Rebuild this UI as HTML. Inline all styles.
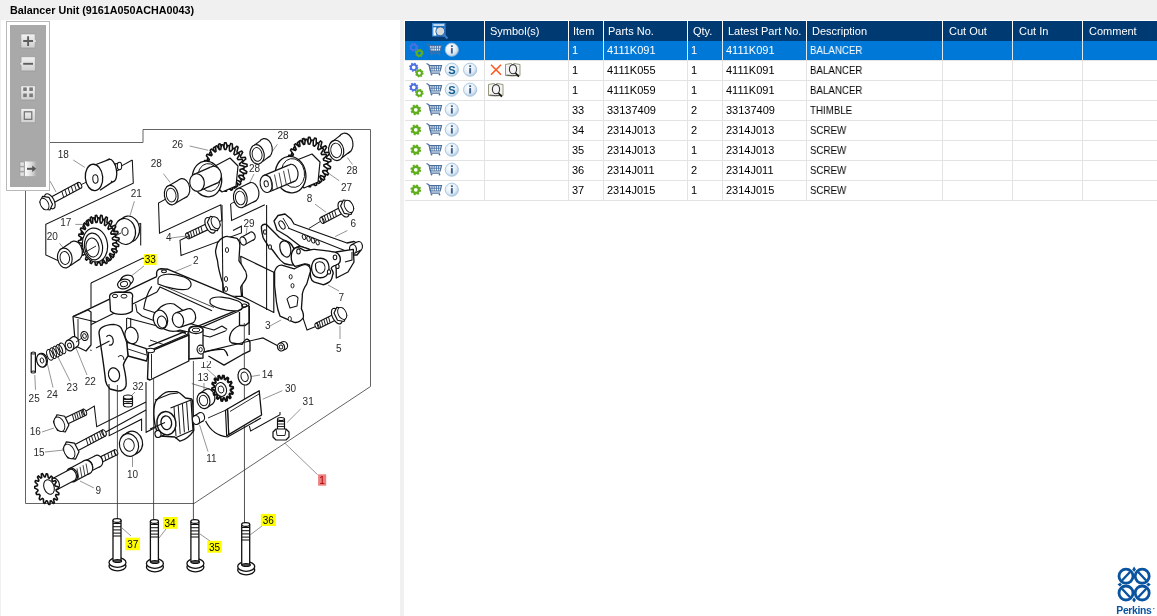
<!DOCTYPE html>
<html><head><meta charset="utf-8">
<style>
*{margin:0;padding:0;box-sizing:border-box}
html,body{width:1157px;height:616px;overflow:hidden;background:#f0f0f0;font-family:"Liberation Sans",sans-serif;position:relative}
#title{will-change:transform;position:absolute;left:10px;top:3px;font-size:10.75px;font-weight:bold;color:#000;white-space:nowrap;line-height:14px}
#left{position:absolute;left:1px;top:20px;width:399px;height:596px;background:#fff}
#right{position:absolute;left:404px;top:20px;width:753px;height:596px;background:#fff}
#diag{position:absolute;left:0;top:0}
#tb{position:absolute;left:6px;top:21px;width:44px;height:170px;border:1px solid #b9b9b9;background:#fff}
#tbi{position:absolute;left:3px;top:3px;width:36px;height:162px;background:#a9a9a9}
.hdr{position:absolute;left:405px;top:21px;width:752px;height:20px;background:#003a72}
.sel{position:absolute;left:405px;top:41px;width:752px;height:19px;background:#0078d7}
.t{will-change:transform;position:absolute;font-size:11px;line-height:14px;white-space:nowrap;color:#000}
.th{will-change:transform;position:absolute;font-size:11px;line-height:14px;white-space:nowrap;color:#fff}
.vl{position:absolute;width:1px;background:#e3e3e3}
.vh{position:absolute;width:1px;background:#ffffff;top:21px;height:20px}
.hl{position:absolute;height:1px;background:#e3e3e3;left:405px;width:752px}

</style></head><body>
<div id="title">Balancer Unit (9161A050ACHA0043)</div>
<div id="left"></div>
<div id="right"></div>
<svg id="diag" width="400" height="616" style="position:absolute;left:0;top:0;will-change:transform"><g><polyline points="26.0,142.5 143.0,142.5 143.0,129.5 370.5,129.5 370.5,386.5 194.0,503.5 25.5,503.5 25.5,142.5" fill="none" stroke="#606060" stroke-width="0.98"/>
<text x="57.7" y="158.3" font-family="Liberation Sans" font-size="10" fill="#2a2a2a">18</text>
<text x="172.0" y="147.6" font-family="Liberation Sans" font-size="10" fill="#2a2a2a">26</text>
<text x="150.7" y="167.2" font-family="Liberation Sans" font-size="10" fill="#2a2a2a">28</text>
<text x="277.4" y="139.2" font-family="Liberation Sans" font-size="10" fill="#2a2a2a">28</text>
<text x="249.0" y="172.2" font-family="Liberation Sans" font-size="10" fill="#2a2a2a">28</text>
<text x="346.4" y="173.9" font-family="Liberation Sans" font-size="10" fill="#2a2a2a">28</text>
<text x="341.0" y="191.2" font-family="Liberation Sans" font-size="10" fill="#2a2a2a">27</text>
<text x="130.8" y="196.9" font-family="Liberation Sans" font-size="10" fill="#2a2a2a">21</text>
<text x="60.2" y="226.1" font-family="Liberation Sans" font-size="10" fill="#2a2a2a">17</text>
<text x="46.8" y="239.5" font-family="Liberation Sans" font-size="10" fill="#2a2a2a">20</text>
<text x="166.0" y="241.2" font-family="Liberation Sans" font-size="10" fill="#2a2a2a">4</text>
<text x="243.5" y="226.9" font-family="Liberation Sans" font-size="10" fill="#2a2a2a">29</text>
<text x="306.8" y="202.2" font-family="Liberation Sans" font-size="10" fill="#2a2a2a">8</text>
<text x="350.4" y="226.6" font-family="Liberation Sans" font-size="10" fill="#2a2a2a">6</text>
<text x="193.0" y="263.5" font-family="Liberation Sans" font-size="10" fill="#2a2a2a">2</text>
<text x="338.6" y="300.6" font-family="Liberation Sans" font-size="10" fill="#2a2a2a">7</text>
<text x="265.0" y="328.7" font-family="Liberation Sans" font-size="10" fill="#2a2a2a">3</text>
<text x="336.0" y="351.5" font-family="Liberation Sans" font-size="10" fill="#2a2a2a">5</text>
<text x="28.6" y="402.4" font-family="Liberation Sans" font-size="10" fill="#2a2a2a">25</text>
<text x="46.8" y="397.8" font-family="Liberation Sans" font-size="10" fill="#2a2a2a">24</text>
<text x="66.6" y="391.2" font-family="Liberation Sans" font-size="10" fill="#2a2a2a">23</text>
<text x="84.8" y="385.3" font-family="Liberation Sans" font-size="10" fill="#2a2a2a">22</text>
<text x="132.5" y="390.0" font-family="Liberation Sans" font-size="10" fill="#2a2a2a">32</text>
<text x="200.4" y="368.2" font-family="Liberation Sans" font-size="10" fill="#2a2a2a">12</text>
<text x="197.4" y="381.2" font-family="Liberation Sans" font-size="10" fill="#2a2a2a">13</text>
<text x="261.7" y="378.3" font-family="Liberation Sans" font-size="10" fill="#2a2a2a">14</text>
<text x="285.0" y="391.5" font-family="Liberation Sans" font-size="10" fill="#2a2a2a">30</text>
<text x="302.6" y="404.6" font-family="Liberation Sans" font-size="10" fill="#2a2a2a">31</text>
<text x="206.2" y="461.6" font-family="Liberation Sans" font-size="10" fill="#2a2a2a">11</text>
<text x="29.7" y="435.4" font-family="Liberation Sans" font-size="10" fill="#2a2a2a">16</text>
<text x="33.4" y="456.2" font-family="Liberation Sans" font-size="10" fill="#2a2a2a">15</text>
<text x="127.0" y="478.2" font-family="Liberation Sans" font-size="10" fill="#2a2a2a">10</text>
<text x="95.5" y="493.8" font-family="Liberation Sans" font-size="10" fill="#2a2a2a">9</text>
<polyline points="73.2,160.0 84.8,167.4" fill="none" stroke="#777" stroke-width="0.78"/>
<polyline points="132.3,160.0 133.3,183.2 45.8,224.4 45.8,255.0 61.6,262.3" fill="none" stroke="#111" stroke-width="1.04"/>
<polyline points="132.3,160.0 120.7,166.4" fill="none" stroke="#111" stroke-width="1.04"/>
<polyline points="50.0,181.0 56.0,192.0" fill="none" stroke="#777" stroke-width="0.78"/>
<polyline points="79.6,185.3 93.3,179.0" fill="none" stroke="#111" stroke-width="0.91"/>
<ellipse cx="116.0" cy="167.5" rx="2.2" ry="3.8" transform="rotate(0 116.0 167.5)" fill="#fff" stroke="#111" stroke-width="1.04"/>
<polygon points="118.2,162.9 114.7,164.4 117.3,170.6 120.8,169.1" fill="#fff" stroke="none" stroke-width="0.00" stroke-linejoin="round"/>
<polyline points="118.2,162.9 114.7,164.4" fill="none" stroke="#111" stroke-width="1.04"/>
<polyline points="120.8,169.1 117.3,170.6" fill="none" stroke="#111" stroke-width="1.04"/>
<ellipse cx="119.5" cy="166.0" rx="2.2" ry="3.8" transform="rotate(0 119.5 166.0)" fill="#fff" stroke="#111" stroke-width="1.04"/>
<ellipse cx="111.0" cy="170.5" rx="5.5" ry="11.5" transform="rotate(-10 111.0 170.5)" fill="#fff" stroke="#111" stroke-width="1.30"/>
<polygon points="94.0,164.3 110.0,159.0 111.0,182.0 101.0,190.5" fill="#fff" stroke="#111" stroke-width="0.00" stroke-linejoin="round"/>
<polyline points="96.0,164.5 110.0,159.1" fill="none" stroke="#111" stroke-width="1.30"/>
<polyline points="100.0,190.3 112.5,181.9" fill="none" stroke="#111" stroke-width="1.30"/>
<ellipse cx="94.0" cy="177.4" rx="8.7" ry="13.2" transform="rotate(-5 94.0 177.4)" fill="#fff" stroke="#111" stroke-width="1.30"/>
<ellipse cx="95.4" cy="179.0" rx="2.6" ry="4.2" transform="rotate(-5 95.4 179.0)" fill="#fff" stroke="#111" stroke-width="1.04"/>
<polygon points="49.5,205.0 81.1,188.1 78.1,182.5 46.5,199.4" fill="#fff" stroke="#111" stroke-width="1.17" stroke-linejoin="round"/>
<ellipse cx="79.6" cy="185.3" rx="1.8" ry="3.2" transform="rotate(-28.138322503823897 79.6 185.3)" fill="#fff" stroke="#111" stroke-width="0.94"/>
<polyline points="79.5,189.0 77.6,182.8" fill="none" stroke="#111" stroke-width="0.94"/>
<polyline points="76.4,190.7 74.4,184.4" fill="none" stroke="#111" stroke-width="0.94"/>
<polyline points="73.2,192.3 71.2,186.1" fill="none" stroke="#111" stroke-width="0.94"/>
<polyline points="70.0,194.0 68.1,187.8" fill="none" stroke="#111" stroke-width="0.94"/>
<polyline points="66.9,195.7 64.9,189.5" fill="none" stroke="#111" stroke-width="0.94"/>
<polyline points="63.7,197.4 61.8,191.2" fill="none" stroke="#111" stroke-width="0.94"/>
<ellipse cx="49.8" cy="201.3" rx="4.3" ry="8.2" transform="rotate(-28.138322503823897 49.8 201.3)" fill="#fff" stroke="#111" stroke-width="1.17"/>
<polygon points="52.5,204.2 49.9,210.0 43.6,209.0 39.9,202.1 42.6,196.3 48.9,197.3" fill="#fff" stroke="#111" stroke-width="1.17" stroke-linejoin="round"/>
<ellipse cx="44.5" cy="204.1" rx="3.9" ry="6.2" transform="rotate(-28.138322503823897 44.5 204.1)" fill="#fff" stroke="#111" stroke-width="0.94"/>
<polyline points="134.4,201.2 129.0,219.0" fill="none" stroke="#777" stroke-width="0.78"/>
<polyline points="59.5,243.3 64.8,249.7" fill="none" stroke="#777" stroke-width="0.78"/>
<polyline points="75.3,224.4 84.8,224.4" fill="none" stroke="#777" stroke-width="0.78"/>
<polyline points="140.7,223.3 140.7,245.4" fill="none" stroke="#111" stroke-width="1.04"/>
<polyline points="140.7,223.3 133.0,227.0" fill="none" stroke="#111" stroke-width="1.04"/>
<ellipse cx="129.0" cy="229.0" rx="10.5" ry="13.0" transform="rotate(-8 129.0 229.0)" fill="#fff" stroke="#111" stroke-width="1.17"/>
<polygon points="131.6,242.1 135.6,239.6 122.4,218.4 118.4,220.9" fill="#fff" stroke="none" stroke-width="0.00" stroke-linejoin="round"/>
<polyline points="131.6,242.1 135.6,239.6" fill="none" stroke="#111" stroke-width="1.17"/>
<polyline points="118.4,220.9 122.4,218.4" fill="none" stroke="#111" stroke-width="1.17"/>
<ellipse cx="125.0" cy="231.5" rx="10.5" ry="13.0" transform="rotate(-8 125.0 231.5)" fill="#fff" stroke="#111" stroke-width="1.17"/>
<ellipse cx="125.0" cy="231.5" rx="3.1" ry="3.9" transform="rotate(-8 125.0 231.5)" fill="#fff" stroke="#111" stroke-width="0.94"/>
<polyline points="109.0,239.0 121.0,233.0" fill="none" stroke="#111" stroke-width="0.91"/>
<polygon points="115.1,236.9 119.0,238.1 119.1,239.8 115.3,241.0 115.2,242.3 118.8,244.8 118.5,246.5 114.5,246.3 114.1,247.5 117.1,251.1 116.4,252.6 112.5,250.9 111.9,252.0 113.9,256.4 113.0,257.6 109.6,254.7 108.7,255.4 109.7,260.3 108.5,261.1 105.8,257.1 104.8,257.5 104.7,262.5 103.3,262.8 101.6,258.1 100.5,258.1 99.3,262.8 97.9,262.5 97.2,257.6 96.2,257.2 93.9,261.1 92.6,260.4 93.1,255.5 92.2,254.8 89.1,257.7 88.0,256.6 89.6,252.1 88.8,251.1 85.1,252.7 84.3,251.3 86.8,247.6 86.3,246.4 82.3,246.6 81.9,245.0 85.2,242.5 84.9,241.1 81.0,239.9 80.9,238.2 84.7,237.0 84.8,235.7 81.2,233.2 81.5,231.5 85.5,231.7 85.9,230.5 82.9,226.9 83.6,225.4 87.5,227.1 88.1,226.0 86.1,221.6 87.0,220.4 90.4,223.3 91.3,222.6 90.3,217.7 91.5,216.9 94.2,220.9 95.2,220.5 95.3,215.5 96.7,215.2 98.4,219.9 99.5,219.9 100.7,215.2 102.1,215.5 102.8,220.4 103.8,220.8 106.1,216.9 107.4,217.6 106.9,222.5 107.8,223.2 110.9,220.3 112.0,221.4 110.4,225.9 111.2,226.9 114.9,225.3 115.7,226.7 113.2,230.4 113.7,231.6 117.7,231.4 118.1,233.0 114.8,235.5 115.1,236.9" fill="#fff" stroke="#111" stroke-width="1.56" stroke-linejoin="round"/>
<polygon points="112.6,239.4 116.5,240.6 116.6,242.3 112.8,243.5 112.7,244.8 116.3,247.3 116.0,249.0 112.0,248.8 111.6,250.0 114.6,253.6 113.9,255.1 110.0,253.4 109.4,254.5 111.4,258.9 110.5,260.1 107.1,257.2 106.2,257.9 107.2,262.8 106.0,263.6 103.3,259.6 102.3,260.0 102.2,265.0 100.8,265.3 99.1,260.6 98.0,260.6 96.8,265.3 95.4,265.0 94.7,260.1 93.7,259.7 91.4,263.6 90.1,262.9 90.6,258.0 89.7,257.3 86.6,260.2 85.5,259.1 87.1,254.6 86.3,253.6 82.6,255.2 81.8,253.8 84.3,250.1 83.8,248.9 79.8,249.1 79.4,247.5 82.7,245.0 82.4,243.6 78.5,242.4 78.4,240.7 82.2,239.5 82.3,238.2 78.7,235.7 79.0,234.0 83.0,234.2 83.4,233.0 80.4,229.4 81.1,227.9 85.0,229.6 85.6,228.5 83.6,224.1 84.5,222.9 87.9,225.8 88.8,225.1 87.8,220.2 89.0,219.4 91.7,223.4 92.7,223.0 92.8,218.0 94.2,217.7 95.9,222.4 97.0,222.4 98.2,217.7 99.6,218.0 100.3,222.9 101.3,223.3 103.6,219.4 104.9,220.1 104.4,225.0 105.3,225.7 108.4,222.8 109.5,223.9 107.9,228.4 108.7,229.4 112.4,227.8 113.2,229.2 110.7,232.9 111.2,234.1 115.2,233.9 115.6,235.5 112.3,238.0 112.6,239.4" fill="#fff" stroke="#111" stroke-width="1.56" stroke-linejoin="round"/>
<ellipse cx="95.0" cy="245.0" rx="12.5" ry="17.0" transform="rotate(-8 95.0 245.0)" fill="#fff" stroke="#111" stroke-width="1.17"/>
<ellipse cx="93.5" cy="246.5" rx="9.0" ry="13.5" transform="rotate(-8 93.5 246.5)" fill="#fff" stroke="#111" stroke-width="1.17"/>
<ellipse cx="92.5" cy="247.5" rx="6.5" ry="9.5" transform="rotate(-8 92.5 247.5)" fill="#fff" stroke="#111" stroke-width="1.04"/>
<polyline points="85.9,251.8 96.0,246.0" fill="none" stroke="#111" stroke-width="0.91"/>
<ellipse cx="75.0" cy="251.0" rx="7.2" ry="10.0" transform="rotate(-10 75.0 251.0)" fill="#fff" stroke="#111" stroke-width="1.17"/>
<polygon points="70.1,265.7 80.3,258.7 69.7,243.3 59.5,250.3" fill="#fff" stroke="none" stroke-width="0.00" stroke-linejoin="round"/>
<polyline points="70.1,265.7 80.3,258.7" fill="none" stroke="#111" stroke-width="1.17"/>
<polyline points="59.5,250.3 69.7,243.3" fill="none" stroke="#111" stroke-width="1.17"/>
<ellipse cx="64.8" cy="258.0" rx="7.2" ry="10.0" transform="rotate(-10 64.8 258.0)" fill="#fff" stroke="#111" stroke-width="1.17"/>
<ellipse cx="64.8" cy="258.0" rx="4.7" ry="6.5" transform="rotate(-10 64.8 258.0)" fill="#fff" stroke="#111" stroke-width="0.94"/>
<polyline points="189.7,146.0 208.2,150.3" fill="none" stroke="#777" stroke-width="0.78"/>
<polyline points="163.4,173.7 170.2,182.5" fill="none" stroke="#777" stroke-width="0.78"/>
<polyline points="169.2,197.1 158.5,203.0 159.5,233.1 220.8,204.9 221.8,220.5" fill="none" stroke="#111" stroke-width="1.04"/>
<polyline points="221.8,220.5 214.0,224.0" fill="none" stroke="#111" stroke-width="1.04"/>
<polyline points="171.0,238.0 186.0,236.0" fill="none" stroke="#777" stroke-width="0.78"/>
<ellipse cx="231.0" cy="168.0" rx="6.0" ry="10.0" transform="rotate(-10 231.0 168.0)" fill="#fff" stroke="#111" stroke-width="1.17"/>
<polygon points="242.8,163.2 247.0,164.3 247.1,166.2 243.1,167.6 243.0,169.1 246.8,171.6 246.4,173.4 242.1,173.3 241.7,174.6 244.6,178.3 243.8,179.8 239.7,178.2 238.9,179.3 240.8,183.8 239.6,185.0 236.0,182.0 235.0,182.7 235.5,187.6 234.1,188.2 231.5,184.2 230.3,184.4 229.5,189.2 227.9,189.3 226.5,184.6 225.2,184.4 223.2,188.6 221.7,188.1 221.5,183.2 220.4,182.5 217.3,185.8 215.9,184.8 217.1,180.1 216.2,179.1 212.3,181.0 211.3,179.6 213.7,175.6 213.0,174.3 208.8,174.8 208.2,173.0 211.5,170.2 211.2,168.8 207.0,167.7 206.9,165.8 210.9,164.4 211.0,162.9 207.2,160.4 207.6,158.6 211.9,158.7 212.3,157.4 209.4,153.7 210.2,152.2 214.3,153.8 215.1,152.7 213.2,148.2 214.4,147.0 218.0,150.0 219.0,149.3 218.5,144.4 219.9,143.8 222.5,147.8 223.7,147.6 224.5,142.8 226.1,142.7 227.5,147.4 228.8,147.6 230.8,143.4 232.3,143.9 232.5,148.8 233.6,149.5 236.7,146.2 238.1,147.2 236.9,151.9 237.8,152.9 241.7,151.0 242.7,152.4 240.3,156.4 241.0,157.7 245.2,157.2 245.8,159.0 242.5,161.8 242.8,163.2" fill="#fff" stroke="#111" stroke-width="1.56" stroke-linejoin="round"/>
<polygon points="239.8,165.2 244.0,166.3 244.1,168.2 240.1,169.6 240.0,171.1 243.8,173.6 243.4,175.4 239.1,175.3 238.7,176.6 241.6,180.3 240.8,181.8 236.7,180.2 235.9,181.3 237.8,185.8 236.6,187.0 233.0,184.0 232.0,184.7 232.5,189.6 231.1,190.2 228.5,186.2 227.3,186.4 226.5,191.2 224.9,191.3 223.5,186.6 222.2,186.4 220.2,190.6 218.7,190.1 218.5,185.2 217.4,184.5 214.3,187.8 212.9,186.8 214.1,182.1 213.2,181.1 209.3,183.0 208.3,181.6 210.7,177.6 210.0,176.3 205.8,176.8 205.2,175.0 208.5,172.2 208.2,170.8 204.0,169.7 203.9,167.8 207.9,166.4 208.0,164.9 204.2,162.4 204.6,160.6 208.9,160.7 209.3,159.4 206.4,155.7 207.2,154.2 211.3,155.8 212.1,154.7 210.2,150.2 211.4,149.0 215.0,152.0 216.0,151.3 215.5,146.4 216.9,145.8 219.5,149.8 220.7,149.6 221.5,144.8 223.1,144.7 224.5,149.4 225.8,149.6 227.8,145.4 229.3,145.9 229.5,150.8 230.6,151.5 233.7,148.2 235.1,149.2 233.9,153.9 234.8,154.9 238.7,153.0 239.7,154.4 237.3,158.4 238.0,159.7 242.2,159.2 242.8,161.0 239.5,163.8 239.8,165.2" fill="#fff" stroke="#111" stroke-width="1.56" stroke-linejoin="round"/>
<polygon points="215.0,166.0 230.0,158.0 238.0,166.0 236.0,186.0 222.0,192.0 214.0,184.0" fill="#fff" stroke="#111" stroke-width="1.17" stroke-linejoin="round"/>
<ellipse cx="207.0" cy="179.0" rx="14.6" ry="18.0" transform="rotate(-10 207.0 179.0)" fill="#fff" stroke="#111" stroke-width="1.30"/>
<ellipse cx="209.0" cy="177.5" rx="11.0" ry="14.0" transform="rotate(-10 209.0 177.5)" fill="none" stroke="#111" stroke-width="0.91"/>
<ellipse cx="214.0" cy="175.0" rx="7.3" ry="8.8" transform="rotate(-10 214.0 175.0)" fill="#fff" stroke="#111" stroke-width="1.17"/>
<polygon points="200.5,190.4 217.5,182.9 210.5,167.1 193.5,174.6" fill="#fff" stroke="none" stroke-width="0.00" stroke-linejoin="round"/>
<polyline points="200.5,190.4 217.5,182.9" fill="none" stroke="#111" stroke-width="1.17"/>
<polyline points="193.5,174.6 210.5,167.1" fill="none" stroke="#111" stroke-width="1.17"/>
<ellipse cx="197.0" cy="182.5" rx="7.3" ry="8.8" transform="rotate(-10 197.0 182.5)" fill="#fff" stroke="#111" stroke-width="1.17"/>
<ellipse cx="182.9" cy="188.3" rx="6.8" ry="9.8" transform="rotate(-10 182.9 188.3)" fill="#fff" stroke="#111" stroke-width="1.17"/>
<polygon points="175.8,203.1 187.5,196.3 178.3,180.3 166.6,187.1" fill="#fff" stroke="none" stroke-width="0.00" stroke-linejoin="round"/>
<polyline points="175.8,203.1 187.5,196.3" fill="none" stroke="#111" stroke-width="1.17"/>
<polyline points="166.6,187.1 178.3,180.3" fill="none" stroke="#111" stroke-width="1.17"/>
<ellipse cx="171.2" cy="195.1" rx="6.8" ry="9.8" transform="rotate(-10 171.2 195.1)" fill="#fff" stroke="#111" stroke-width="1.17"/>
<ellipse cx="171.2" cy="195.1" rx="4.8" ry="6.9" transform="rotate(-10 171.2 195.1)" fill="#fff" stroke="#111" stroke-width="0.94"/>
<polygon points="210.7,221.7 186.4,233.3 189.0,238.7 213.3,227.1" fill="#fff" stroke="#111" stroke-width="1.17" stroke-linejoin="round"/>
<ellipse cx="187.7" cy="236.0" rx="1.7" ry="3.0" transform="rotate(154.48176517732546 187.7 236.0)" fill="#fff" stroke="#111" stroke-width="0.94"/>
<polyline points="187.7,232.7 189.2,238.6" fill="none" stroke="#111" stroke-width="0.94"/>
<polyline points="190.4,231.4 191.9,237.3" fill="none" stroke="#111" stroke-width="0.94"/>
<polyline points="193.0,230.2 194.5,236.1" fill="none" stroke="#111" stroke-width="0.94"/>
<polyline points="195.6,228.9 197.1,234.8" fill="none" stroke="#111" stroke-width="0.94"/>
<polyline points="198.3,227.6 199.8,233.6" fill="none" stroke="#111" stroke-width="0.94"/>
<polyline points="200.9,226.4 202.4,232.3" fill="none" stroke="#111" stroke-width="0.94"/>
<ellipse cx="210.2" cy="225.3" rx="4.4" ry="8.4" transform="rotate(154.48176517732546 210.2 225.3)" fill="#fff" stroke="#111" stroke-width="1.17"/>
<polygon points="207.4,222.2 210.4,216.3 216.8,217.7 220.2,224.9 217.3,230.8 210.8,229.4" fill="#fff" stroke="#111" stroke-width="1.17" stroke-linejoin="round"/>
<ellipse cx="215.6" cy="222.7" rx="4.0" ry="6.4" transform="rotate(154.48176517732546 215.6 222.7)" fill="#fff" stroke="#111" stroke-width="0.94"/>
<polyline points="254.0,174.0 248.0,186.0" fill="none" stroke="#777" stroke-width="0.78"/>
<polyline points="230.6,203.9 231.6,220.5 264.8,204.7" fill="none" stroke="#111" stroke-width="1.04"/>
<polyline points="230.6,203.9 240.0,199.0" fill="none" stroke="#111" stroke-width="0.91"/>
<ellipse cx="252.0" cy="192.2" rx="6.8" ry="9.8" transform="rotate(-10 252.0 192.2)" fill="#fff" stroke="#111" stroke-width="1.17"/>
<polygon points="244.5,206.4 256.2,200.6 247.8,183.8 236.1,189.6" fill="#fff" stroke="none" stroke-width="0.00" stroke-linejoin="round"/>
<polyline points="244.5,206.4 256.2,200.6" fill="none" stroke="#111" stroke-width="1.17"/>
<polyline points="236.1,189.6 247.8,183.8" fill="none" stroke="#111" stroke-width="1.17"/>
<ellipse cx="240.3" cy="198.0" rx="6.8" ry="9.8" transform="rotate(-10 240.3 198.0)" fill="#fff" stroke="#111" stroke-width="1.17"/>
<ellipse cx="240.3" cy="198.0" rx="4.8" ry="6.9" transform="rotate(-10 240.3 198.0)" fill="#fff" stroke="#111" stroke-width="0.94"/>
<polyline points="247.0,227.3 246.2,234.0" fill="none" stroke="#777" stroke-width="0.78"/>
<ellipse cx="252.0" cy="236.0" rx="3.0" ry="4.2" transform="rotate(-20 252.0 236.0)" fill="#fff" stroke="#111" stroke-width="1.17"/>
<polygon points="245.0,244.6 254.0,239.6 250.0,232.4 241.0,237.4" fill="#fff" stroke="none" stroke-width="0.00" stroke-linejoin="round"/>
<polyline points="245.0,244.6 254.0,239.6" fill="none" stroke="#111" stroke-width="1.17"/>
<polyline points="241.0,237.4 250.0,232.4" fill="none" stroke="#111" stroke-width="1.17"/>
<ellipse cx="243.0" cy="241.0" rx="3.0" ry="4.2" transform="rotate(-20 243.0 241.0)" fill="#fff" stroke="#111" stroke-width="1.17"/>
<polyline points="277.4,144.3 272.3,151.4" fill="none" stroke="#777" stroke-width="0.78"/>
<ellipse cx="265.2" cy="148.3" rx="7.0" ry="9.8" transform="rotate(-10 265.2 148.3)" fill="#fff" stroke="#111" stroke-width="1.17"/>
<polygon points="262.5,161.6 270.6,155.5 259.8,141.1 251.7,147.2" fill="#fff" stroke="none" stroke-width="0.00" stroke-linejoin="round"/>
<polyline points="262.5,161.6 270.6,155.5" fill="none" stroke="#111" stroke-width="1.17"/>
<polyline points="251.7,147.2 259.8,141.1" fill="none" stroke="#111" stroke-width="1.17"/>
<ellipse cx="257.1" cy="154.4" rx="7.0" ry="9.8" transform="rotate(-10 257.1 154.4)" fill="#fff" stroke="#111" stroke-width="1.17"/>
<ellipse cx="257.1" cy="154.4" rx="4.9" ry="6.9" transform="rotate(-10 257.1 154.4)" fill="#fff" stroke="#111" stroke-width="0.94"/>
<polyline points="329.1,173.7 339.3,180.8" fill="none" stroke="#777" stroke-width="0.78"/>
<polygon points="326.6,158.2 330.8,159.4 330.9,161.3 326.9,162.7 326.9,164.2 330.6,166.8 330.3,168.6 326.0,168.5 325.6,169.8 328.5,173.6 327.7,175.1 323.6,173.5 322.8,174.6 324.7,179.2 323.5,180.3 320.0,177.3 319.0,178.0 319.6,183.0 318.1,183.6 315.5,179.5 314.3,179.8 313.6,184.6 312.0,184.7 310.6,179.9 309.3,179.7 307.4,184.0 305.8,183.4 305.7,178.4 304.5,177.8 301.5,181.1 300.1,180.0 301.3,175.3 300.3,174.2 296.5,176.2 295.5,174.7 297.9,170.7 297.2,169.4 293.0,169.8 292.4,168.1 295.7,165.2 295.4,163.8 291.2,162.6 291.1,160.7 295.1,159.3 295.1,157.8 291.4,155.2 291.7,153.4 296.0,153.5 296.4,152.2 293.5,148.4 294.3,146.9 298.4,148.5 299.2,147.4 297.3,142.8 298.5,141.7 302.0,144.7 303.0,144.0 302.4,139.0 303.9,138.4 306.5,142.5 307.7,142.2 308.4,137.4 310.0,137.3 311.4,142.1 312.7,142.3 314.6,138.0 316.2,138.6 316.3,143.6 317.5,144.2 320.5,140.9 321.9,142.0 320.7,146.7 321.7,147.8 325.5,145.8 326.5,147.3 324.1,151.3 324.8,152.6 329.0,152.2 329.6,153.9 326.3,156.8 326.6,158.2" fill="#fff" stroke="#111" stroke-width="1.56" stroke-linejoin="round"/>
<polygon points="323.6,160.2 327.8,161.4 327.9,163.3 323.9,164.7 323.9,166.2 327.6,168.8 327.3,170.6 323.0,170.5 322.6,171.8 325.5,175.6 324.7,177.1 320.6,175.5 319.8,176.6 321.7,181.2 320.5,182.3 317.0,179.3 316.0,180.0 316.6,185.0 315.1,185.6 312.5,181.5 311.3,181.8 310.6,186.6 309.0,186.7 307.6,181.9 306.3,181.7 304.4,186.0 302.8,185.4 302.7,180.4 301.5,179.8 298.5,183.1 297.1,182.0 298.3,177.3 297.3,176.2 293.5,178.2 292.5,176.7 294.9,172.7 294.2,171.4 290.0,171.8 289.4,170.1 292.7,167.2 292.4,165.8 288.2,164.6 288.1,162.7 292.1,161.3 292.1,159.8 288.4,157.2 288.7,155.4 293.0,155.5 293.4,154.2 290.5,150.4 291.3,148.9 295.4,150.5 296.2,149.4 294.3,144.8 295.5,143.7 299.0,146.7 300.0,146.0 299.4,141.0 300.9,140.4 303.5,144.5 304.7,144.2 305.4,139.4 307.0,139.3 308.4,144.1 309.7,144.3 311.6,140.0 313.2,140.6 313.3,145.6 314.5,146.2 317.5,142.9 318.9,144.0 317.7,148.7 318.7,149.8 322.5,147.8 323.5,149.3 321.1,153.3 321.8,154.6 326.0,154.2 326.6,155.9 323.3,158.8 323.6,160.2" fill="#fff" stroke="#111" stroke-width="1.56" stroke-linejoin="round"/>
<polygon points="297.0,160.0 312.0,154.0 320.0,162.0 318.0,182.0 304.0,188.0 296.0,180.0" fill="#fff" stroke="#111" stroke-width="1.17" stroke-linejoin="round"/>
<ellipse cx="290.6" cy="174.7" rx="15.2" ry="18.3" transform="rotate(-10 290.6 174.7)" fill="#fff" stroke="#111" stroke-width="1.30"/>
<ellipse cx="293.0" cy="173.0" rx="11.5" ry="14.5" transform="rotate(-10 293.0 173.0)" fill="none" stroke="#111" stroke-width="0.91"/>
<ellipse cx="292.0" cy="173.0" rx="6.0" ry="8.8" transform="rotate(-10 292.0 173.0)" fill="#fff" stroke="#111" stroke-width="1.17"/>
<polygon points="269.5,191.7 295.3,180.9 288.7,165.1 262.9,175.9" fill="#fff" stroke="none" stroke-width="0.00" stroke-linejoin="round"/>
<polyline points="269.5,191.7 295.3,180.9" fill="none" stroke="#111" stroke-width="1.17"/>
<polyline points="262.9,175.9 288.7,165.1" fill="none" stroke="#111" stroke-width="1.17"/>
<ellipse cx="266.2" cy="183.8" rx="6.0" ry="8.8" transform="rotate(-10 266.2 183.8)" fill="#fff" stroke="#111" stroke-width="1.17"/>
<ellipse cx="266.2" cy="183.8" rx="2.1" ry="3.1" transform="rotate(-10 266.2 183.8)" fill="#fff" stroke="#111" stroke-width="0.94"/>
<polyline points="270.0,176.5 273.0,191.0" fill="none" stroke="#111" stroke-width="0.78"/>
<polyline points="274.5,174.6 277.5,189.1" fill="none" stroke="#111" stroke-width="0.78"/>
<polyline points="279.0,172.7 282.0,187.2" fill="none" stroke="#111" stroke-width="0.78"/>
<polyline points="283.5,170.8 286.5,185.3" fill="none" stroke="#111" stroke-width="0.78"/>
<polyline points="288.0,168.9 291.0,183.4" fill="none" stroke="#111" stroke-width="0.78"/>
<polyline points="347.4,157.5 352.5,164.6" fill="none" stroke="#777" stroke-width="0.78"/>
<ellipse cx="345.4" cy="143.3" rx="7.5" ry="10.2" transform="rotate(-10 345.4 143.3)" fill="#fff" stroke="#111" stroke-width="1.17"/>
<polygon points="341.9,157.8 351.1,150.7 339.7,135.9 330.5,143.0" fill="#fff" stroke="none" stroke-width="0.00" stroke-linejoin="round"/>
<polyline points="341.9,157.8 351.1,150.7" fill="none" stroke="#111" stroke-width="1.17"/>
<polyline points="330.5,143.0 339.7,135.9" fill="none" stroke="#111" stroke-width="1.17"/>
<ellipse cx="336.2" cy="150.4" rx="7.5" ry="10.2" transform="rotate(-10 336.2 150.4)" fill="#fff" stroke="#111" stroke-width="1.17"/>
<ellipse cx="336.2" cy="150.4" rx="5.4" ry="7.3" transform="rotate(-10 336.2 150.4)" fill="#fff" stroke="#111" stroke-width="0.94"/>
<polyline points="315.0,204.1 326.1,212.3" fill="none" stroke="#777" stroke-width="0.78"/>
<polyline points="322.0,220.4 308.8,228.5" fill="none" stroke="#111" stroke-width="0.91"/>
<polygon points="343.9,205.4 320.5,217.6 323.5,223.2 346.9,211.0" fill="#fff" stroke="#111" stroke-width="1.17" stroke-linejoin="round"/>
<ellipse cx="322.0" cy="220.4" rx="1.8" ry="3.2" transform="rotate(152.4639268918428 322.0 220.4)" fill="#fff" stroke="#111" stroke-width="0.94"/>
<polyline points="321.8,216.9 323.7,223.1" fill="none" stroke="#111" stroke-width="0.94"/>
<polyline points="324.3,215.6 326.2,221.8" fill="none" stroke="#111" stroke-width="0.94"/>
<polyline points="326.9,214.3 328.8,220.5" fill="none" stroke="#111" stroke-width="0.94"/>
<polyline points="329.4,212.9 331.3,219.2" fill="none" stroke="#111" stroke-width="0.94"/>
<polyline points="331.9,211.6 333.8,217.8" fill="none" stroke="#111" stroke-width="0.94"/>
<polyline points="334.5,210.3 336.4,216.5" fill="none" stroke="#111" stroke-width="0.94"/>
<ellipse cx="343.6" cy="209.1" rx="4.5" ry="8.6" transform="rotate(152.4639268918428 343.6 209.1)" fill="#fff" stroke="#111" stroke-width="1.17"/>
<polygon points="340.6,206.1 343.4,200.0 350.0,201.2 353.8,208.4 351.0,214.5 344.3,213.4" fill="#fff" stroke="#111" stroke-width="1.17" stroke-linejoin="round"/>
<ellipse cx="348.9" cy="206.4" rx="4.1" ry="6.6" transform="rotate(152.4639268918428 348.9 206.4)" fill="#fff" stroke="#111" stroke-width="0.94"/>
<polyline points="188.0,236.5 180.0,240.2 181.0,255.4 241.4,233.0 241.4,226.2 233.0,230.5" fill="none" stroke="#111" stroke-width="1.04"/>
<polygon points="274.0,221.0 278.0,215.5 285.0,214.0 291.0,219.0 294.0,224.0 347.0,243.0 354.0,241.5 360.0,244.5 361.0,250.0 357.0,255.0 351.0,255.0 345.0,258.0 327.0,256.0 300.0,246.0 287.0,236.0 277.0,230.0" fill="#fff" stroke="#111" stroke-width="1.30" stroke-linejoin="round"/>
<polyline points="288.0,228.0 346.0,251.0" fill="none" stroke="#111" stroke-width="1.04"/>
<polyline points="283.0,218.0 289.0,228.0" fill="none" stroke="#111" stroke-width="0.91"/>
<ellipse cx="304.0" cy="237.0" rx="1.6" ry="2.6" transform="rotate(-20 304.0 237.0)" fill="#fff" stroke="#111" stroke-width="0.91"/>
<ellipse cx="308.5" cy="238.8" rx="1.6" ry="2.6" transform="rotate(-20 308.5 238.8)" fill="#fff" stroke="#111" stroke-width="0.91"/>
<ellipse cx="313.0" cy="240.6" rx="1.6" ry="2.6" transform="rotate(-20 313.0 240.6)" fill="#fff" stroke="#111" stroke-width="0.91"/>
<ellipse cx="317.5" cy="242.4" rx="1.6" ry="2.6" transform="rotate(-20 317.5 242.4)" fill="#fff" stroke="#111" stroke-width="0.91"/>
<ellipse cx="282.0" cy="225.0" rx="2.4" ry="4.5" transform="rotate(-30 282.0 225.0)" fill="#fff" stroke="#111" stroke-width="1.04"/>
<ellipse cx="359.0" cy="246.0" rx="3.4" ry="4.5" transform="rotate(-10 359.0 246.0)" fill="#fff" stroke="#111" stroke-width="1.17"/>
<polygon points="355.0,252.9 361.0,249.9 357.0,242.1 351.0,245.1" fill="#fff" stroke="none" stroke-width="0.00" stroke-linejoin="round"/>
<polyline points="355.0,252.9 361.0,249.9" fill="none" stroke="#111" stroke-width="1.17"/>
<polyline points="351.0,245.1 357.0,242.1" fill="none" stroke="#111" stroke-width="1.17"/>
<ellipse cx="353.0" cy="249.0" rx="3.4" ry="4.5" transform="rotate(-10 353.0 249.0)" fill="#fff" stroke="#111" stroke-width="1.17"/>
<polyline points="347.4,230.5 335.2,236.6" fill="none" stroke="#777" stroke-width="0.78"/>
<path d="M261.5,226.1 C263,224 265,224 266.4,224.5 L272.9,231 L279.4,237.5 C283,240 286,241 289.1,242.4 C292,244 293,247 294,248.9 C296,247 298,246 300.5,246.4 L308.6,248.9 C311,250 312,252 311.8,253.7 C311,257 310,259 308.6,260.2 C305,262 302,263 300.5,263.5 L292.4,265.1 C289,265 286,264 284.2,263.5 C281,261 279,259 277.7,257 L272.9,250.5 C271,248 269,247 268,245.6 C266,242 264,240 263.1,237.5 C262,233 261,229 261.5,226.1 Z" fill="#fff" stroke="#111" stroke-width="1.37" stroke-linejoin="round"/>
<path d="M280,244 C282,239 288,240 290,246 C292,252 290,258 286,257 C282,256 279,250 280,244 Z" fill="none" stroke="#111" stroke-width="1.23" stroke-linejoin="round"/>
<ellipse cx="265.0" cy="232.0" rx="1.5" ry="2.2" transform="rotate(0 265.0 232.0)" fill="#fff" stroke="#111" stroke-width="1.04"/>
<ellipse cx="270.0" cy="247.0" rx="1.5" ry="2.2" transform="rotate(0 270.0 247.0)" fill="#fff" stroke="#111" stroke-width="1.04"/>
<ellipse cx="299.0" cy="255.0" rx="1.8" ry="2.4" transform="rotate(0 299.0 255.0)" fill="#fff" stroke="#111" stroke-width="1.04"/>
<path d="M336,252 L353.3,249.4 L354,262 L348,272 L336.3,278 Z" fill="#fff" stroke="#111" stroke-width="1.30" stroke-linejoin="round"/>
<polyline points="345.0,262.0 352.0,260.0 352.0,252.0" fill="none" stroke="#111" stroke-width="1.04"/>
<path d="M294.9,248.1 C298,246 302,249 304.6,250.6 C308,251 311,249 314.4,249.4 L325.3,250.6 C328,251 330,251 332.6,251.8 C336,252 339,254 340,257 C341,261 339,264 336.3,265.2 C333,266 331,267 331.4,268.8 C333,271 334,273 332.6,275 C332,279 331,281 329,282.2 C326,284 324,285 322.9,284.7 L314.4,282.2 C312,281 311,279 310.7,277.4 C310,272 310,268 309.5,265.2 C307,264 306,264 304.6,264 C300,265 297,266 294.9,266.4 C290,262 290,252 294.9,248.1 Z" fill="#fff" stroke="#111" stroke-width="1.37" stroke-linejoin="round"/>
<path d="M313,262 C315,258 322,257 326,260 C330,264 330,272 326,276 C322,279 315,278 313,274 C311,270 311,266 313,262 Z" fill="#fff" stroke="#111" stroke-width="1.30" stroke-linejoin="round"/>
<path d="M315.5,264 C317,261 322,261 324,264 C326,267 325,272 322,273 C318,274 315,271 315.5,264 Z" fill="none" stroke="#111" stroke-width="1.04" stroke-linejoin="round"/>
<ellipse cx="298.5" cy="251.5" rx="1.8" ry="2.4" transform="rotate(0 298.5 251.5)" fill="#fff" stroke="#111" stroke-width="1.04"/>
<ellipse cx="335.0" cy="257.3" rx="1.8" ry="2.4" transform="rotate(0 335.0 257.3)" fill="#fff" stroke="#111" stroke-width="1.04"/>
<ellipse cx="329.0" cy="271.9" rx="1.6" ry="2.2" transform="rotate(0 329.0 271.9)" fill="#fff" stroke="#111" stroke-width="1.04"/>
<ellipse cx="337.5" cy="266.4" rx="1.6" ry="2.2" transform="rotate(0 337.5 266.4)" fill="#fff" stroke="#111" stroke-width="1.04"/>
<polyline points="328.0,285.0 339.0,291.0" fill="none" stroke="#777" stroke-width="0.78"/>
<polygon points="240.7,256.3 273.8,272.3 273.8,312.5 242.5,296.4" fill="#fff" stroke="#111" stroke-width="1.17" stroke-linejoin="round"/>
<path d="M217.5,242.9 C220,238 226,236 228.2,236.6 L237.1,238.4 C240,241 240,244 239.8,246.4 L238.9,260.7 C241,264 243,266 243.4,267.9 C247,272 247,276 246.1,278.6 C244,283 241,285 240.7,287.5 L241.6,296.4 L224.6,296.4 C223,290 223,287 222.9,283.9 C220,275 218,266 217.5,260.7 C216,255 215,252 215.7,250 Z" fill="#fff" stroke="#111" stroke-width="1.30" stroke-linejoin="round"/>
<ellipse cx="227.0" cy="250.0" rx="1.6" ry="2.5" transform="rotate(0 227.0 250.0)" fill="#fff" stroke="#111" stroke-width="0.91"/>
<ellipse cx="226.0" cy="279.0" rx="1.6" ry="2.5" transform="rotate(0 226.0 279.0)" fill="#fff" stroke="#111" stroke-width="0.91"/>
<ellipse cx="226.0" cy="289.0" rx="1.6" ry="2.5" transform="rotate(0 226.0 289.0)" fill="#fff" stroke="#111" stroke-width="0.91"/>
<polyline points="222.0,205.0 223.0,300.0" fill="none" stroke="#111" stroke-width="1.04"/>
<polyline points="266.6,205.0 266.6,310.0" fill="none" stroke="#111" stroke-width="1.04"/>
<path d="M274.6,271.4 C276,267 279,265 281.8,265.2 L294.3,268.8 C298,267 301,265 305,264.3 C309,265 311,268 310.4,271.4 L306.8,283.9 C304,288 302,292 302.3,296.4 L301.4,308.9 C303,312 304,315 303.2,317.9 C300,322 297,323 294.3,322.3 L280,316.1 C278,311 277,306 276.4,301.8 L274.6,285.7 Z" fill="#fff" stroke="#111" stroke-width="1.30" stroke-linejoin="round"/>
<ellipse cx="290.7" cy="276.8" rx="1.5" ry="2.2" transform="rotate(0 290.7 276.8)" fill="#fff" stroke="#111" stroke-width="0.91"/>
<ellipse cx="292.5" cy="285.7" rx="1.5" ry="2.2" transform="rotate(0 292.5 285.7)" fill="#fff" stroke="#111" stroke-width="0.91"/>
<ellipse cx="289.8" cy="318.8" rx="1.6" ry="2.3" transform="rotate(0 289.8 318.8)" fill="#fff" stroke="#111" stroke-width="0.91"/>
<path d="M287,299 C290,295 296,294 298,298 L297,306 L290,308 Z" fill="none" stroke="#111" stroke-width="1.04" stroke-linejoin="round"/>
<polyline points="270.0,326.0 281.0,320.0" fill="none" stroke="#777" stroke-width="0.78"/>
<polyline points="303.0,318.0 307.0,330.0 317.0,326.0" fill="none" stroke="#111" stroke-width="1.04"/>
<polygon points="337.3,312.5 315.7,323.3 318.3,328.7 339.9,317.9" fill="#fff" stroke="#111" stroke-width="1.17" stroke-linejoin="round"/>
<ellipse cx="317.0" cy="326.0" rx="1.7" ry="3.0" transform="rotate(153.434948822922 317.0 326.0)" fill="#fff" stroke="#111" stroke-width="0.94"/>
<polyline points="316.8,322.7 318.4,328.6" fill="none" stroke="#111" stroke-width="0.94"/>
<polyline points="319.2,321.6 320.8,327.5" fill="none" stroke="#111" stroke-width="0.94"/>
<polyline points="321.5,320.4 323.1,326.3" fill="none" stroke="#111" stroke-width="0.94"/>
<polyline points="323.8,319.2 325.5,325.1" fill="none" stroke="#111" stroke-width="0.94"/>
<polyline points="326.2,318.1 327.8,324.0" fill="none" stroke="#111" stroke-width="0.94"/>
<polyline points="328.5,316.9 330.1,322.8" fill="none" stroke="#111" stroke-width="0.94"/>
<ellipse cx="336.8" cy="316.1" rx="4.4" ry="8.4" transform="rotate(153.434948822922 336.8 316.1)" fill="#fff" stroke="#111" stroke-width="1.17"/>
<polygon points="334.0,313.1 336.8,307.2 343.2,308.4 346.8,315.6 344.0,321.5 337.5,320.2" fill="#fff" stroke="#111" stroke-width="1.17" stroke-linejoin="round"/>
<ellipse cx="342.2" cy="313.4" rx="4.0" ry="6.4" transform="rotate(153.434948822922 342.2 313.4)" fill="#fff" stroke="#111" stroke-width="0.94"/>
<polyline points="340.0,326.0 340.0,339.0" fill="none" stroke="#777" stroke-width="0.78"/>
<ellipse cx="284.0" cy="345.5" rx="3.5" ry="4.0" transform="rotate(-20 284.0 345.5)" fill="#fff" stroke="#111" stroke-width="1.17"/>
<polygon points="282.8,350.6 285.8,349.1 282.2,341.9 279.2,343.4" fill="#fff" stroke="none" stroke-width="0.00" stroke-linejoin="round"/>
<polyline points="282.8,350.6 285.8,349.1" fill="none" stroke="#111" stroke-width="1.17"/>
<polyline points="279.2,343.4 282.2,341.9" fill="none" stroke="#111" stroke-width="1.17"/>
<ellipse cx="281.0" cy="347.0" rx="3.5" ry="4.0" transform="rotate(-20 281.0 347.0)" fill="#fff" stroke="#111" stroke-width="1.17"/>
<ellipse cx="281.0" cy="347.0" rx="1.8" ry="2.0" transform="rotate(-20 281.0 347.0)" fill="#fff" stroke="#111" stroke-width="0.94"/>
<polyline points="91.0,283.0 91.0,351.0" fill="none" stroke="#111" stroke-width="1.04"/>
<polyline points="91.0,283.0 143.0,258.0 150.0,262.0" fill="none" stroke="#111" stroke-width="1.04"/>
<polyline points="144.0,266.0 130.0,277.0" fill="none" stroke="#777" stroke-width="0.78"/>
<polyline points="191.5,264.8 174.0,272.0" fill="none" stroke="#777" stroke-width="0.78"/>
<ellipse cx="127.0" cy="280.0" rx="6.5" ry="4.8" transform="rotate(-15 127.0 280.0)" fill="#fff" stroke="#111" stroke-width="1.17"/>
<polygon points="128.2,287.2 131.2,283.2 122.8,276.8 119.8,280.8" fill="#fff" stroke="none" stroke-width="0.00" stroke-linejoin="round"/>
<polyline points="128.2,287.2 131.2,283.2" fill="none" stroke="#111" stroke-width="1.17"/>
<polyline points="119.8,280.8 122.8,276.8" fill="none" stroke="#111" stroke-width="1.17"/>
<ellipse cx="124.0" cy="284.0" rx="6.5" ry="4.8" transform="rotate(-15 124.0 284.0)" fill="#fff" stroke="#111" stroke-width="1.17"/>
<ellipse cx="124.0" cy="284.0" rx="3.6" ry="2.6" transform="rotate(-15 124.0 284.0)" fill="#fff" stroke="#111" stroke-width="0.94"/>
<polygon points="73.0,316.0 157.0,276.0 159.0,269.0 168.0,269.0 248.0,302.0 250.0,325.0 249.0,355.0 204.0,362.0 192.0,362.0 150.0,382.0 133.0,378.0 129.0,390.0 108.0,386.0 102.0,372.0 99.0,352.0 75.0,345.0" fill="#fff" stroke="none" stroke-width="0.00" stroke-linejoin="round"/>
<polyline points="73.0,316.6 156.7,276.6" fill="none" stroke="#111" stroke-width="1.30"/>
<path d="M156.7,276.6 C156,272 157,269 161,268.8 L168,269.3 L247.6,302.6 C250,304 249,306 247.6,305.8 L148.6,346.4" fill="none" stroke="#111" stroke-width="1.37" stroke-linejoin="round"/>
<ellipse cx="164.0" cy="271.3" rx="2.4" ry="1.4" transform="rotate(0 164.0 271.3)" fill="none" stroke="#111" stroke-width="1.04"/>
<polyline points="80.0,330.0 157.0,292.0" fill="none" stroke="#111" stroke-width="1.17"/>
<polyline points="157.0,292.0 160.0,287.0 212.0,310.7" fill="none" stroke="#111" stroke-width="1.17"/>
<polyline points="160.0,284.5 214.0,307.5" fill="none" stroke="#111" stroke-width="0.78"/>
<polyline points="237.8,311.5 187.5,333.4" fill="none" stroke="#111" stroke-width="1.17"/>
<polyline points="237.8,311.5 242.0,309.0" fill="none" stroke="#111" stroke-width="1.17"/>
<polyline points="153.0,349.0 188.0,334.0" fill="none" stroke="#111" stroke-width="1.04"/>
<path d="M158,279 C160,273 172,273 184,277 C192,280 193,286 188,289 C180,291 165,287 158,284 Z" fill="#fff" stroke="#111" stroke-width="1.17" stroke-linejoin="round"/>
<path d="M210,300 C213,295 228,297 238,301 C244,304 244,309 238,310.5 C228,312 212,307 210,303 Z" fill="#fff" stroke="#111" stroke-width="1.17" stroke-linejoin="round"/>
<ellipse cx="244.3" cy="305.5" rx="2.6" ry="1.5" transform="rotate(0 244.3 305.5)" fill="none" stroke="#111" stroke-width="1.04"/>
<polyline points="249.0,306.0 249.2,335.0" fill="none" stroke="#111" stroke-width="1.30"/>
<polyline points="135.6,304.2 137.0,312.0 142.0,316.0 186.0,333.0" fill="none" stroke="#111" stroke-width="1.04"/>
<polyline points="126.6,318.0 126.6,330.0" fill="none" stroke="#111" stroke-width="1.04"/>
<path d="M127,318 L186,333.5" fill="none" stroke="#111" stroke-width="1.04" stroke-linejoin="round"/>
<path d="M151.8,286.4 C148,292 145,300 143.7,309" fill="none" stroke="#111" stroke-width="1.17" stroke-linejoin="round"/>
<polyline points="130.7,318.0 130.7,331.0" fill="none" stroke="#111" stroke-width="1.04"/>
<polyline points="143.7,309.0 156.0,313.0" fill="none" stroke="#111" stroke-width="1.04"/>
<polyline points="150.0,340.0 186.0,352.0" fill="none" stroke="#111" stroke-width="0.91"/>
<path d="M156,314 C158,307 166,302 174,304 L181,309 C186,312 186,318 184,322 L214,330 L222,326 L228,330 L210,337 L180,330 C172,333 164,330 158,325 Z" fill="#fff" stroke="#111" stroke-width="1.17" stroke-linejoin="round"/>
<ellipse cx="160.5" cy="319.5" rx="7.0" ry="9.5" transform="rotate(-15 160.5 319.5)" fill="#fff" stroke="#111" stroke-width="1.23"/>
<ellipse cx="162.0" cy="322.0" rx="4.5" ry="6.0" transform="rotate(-15 162.0 322.0)" fill="none" stroke="#111" stroke-width="1.04"/>
<ellipse cx="190.0" cy="316.0" rx="5.5" ry="7.5" transform="rotate(-15 190.0 316.0)" fill="#fff" stroke="#111" stroke-width="1.17"/>
<polygon points="180.4,327.1 192.4,323.1 187.6,308.9 175.6,312.9" fill="#fff" stroke="none" stroke-width="0.00" stroke-linejoin="round"/>
<polyline points="180.4,327.1 192.4,323.1" fill="none" stroke="#111" stroke-width="1.17"/>
<polyline points="175.6,312.9 187.6,308.9" fill="none" stroke="#111" stroke-width="1.17"/>
<ellipse cx="178.0" cy="320.0" rx="5.5" ry="7.5" transform="rotate(-15 178.0 320.0)" fill="#fff" stroke="#111" stroke-width="1.17"/>
<ellipse cx="131.5" cy="335.5" rx="6.5" ry="8.5" transform="rotate(-15 131.5 335.5)" fill="#fff" stroke="#111" stroke-width="1.23"/>
<path d="M109.6,296 C110,292.5 114,292 120,292 L130,292.5 C133,293 133,296 132.3,298.5 L132.3,311 C128,315 116,316 110.5,311 Z" fill="#fff" stroke="#111" stroke-width="1.30" stroke-linejoin="round"/>
<ellipse cx="115.0" cy="296.0" rx="2.6" ry="1.7" transform="rotate(0 115.0 296.0)" fill="none" stroke="#111" stroke-width="0.98"/>
<ellipse cx="124.0" cy="296.2" rx="3.0" ry="1.9" transform="rotate(0 124.0 296.2)" fill="none" stroke="#111" stroke-width="0.98"/>
<path d="M73,316.6 L88,310 L91,312 L91,345 L86,351 L75.5,346 Z" fill="#fff" stroke="#111" stroke-width="1.23" stroke-linejoin="round"/>
<ellipse cx="84.5" cy="336.0" rx="3.5" ry="4.5" transform="rotate(-15 84.5 336.0)" fill="#fff" stroke="#111" stroke-width="1.17"/>
<ellipse cx="84.5" cy="336.0" rx="1.8" ry="2.4" transform="rotate(-15 84.5 336.0)" fill="#fff" stroke="#111" stroke-width="0.91"/>
<polyline points="78.0,319.0 78.0,345.0" fill="none" stroke="#111" stroke-width="0.91"/>
<polyline points="73.0,316.6 96.0,322.0" fill="none" stroke="#111" stroke-width="1.04"/>
<path d="M126.7,342.2 L146.2,348.7 L147.5,357 L146.5,361 L128,356 Z" fill="#fff" stroke="#111" stroke-width="1.30" stroke-linejoin="round"/>
<polyline points="128.0,349.0 146.5,355.0" fill="none" stroke="#111" stroke-width="0.91"/>
<path d="M99,333 C99,328 104,325 113.7,324.4 C118,325 121,327 121.8,329.2 C124,334 125,338 126.7,342.2 L128,356 C126,359 124,362 123.4,365 C125,372 127,380 126,386 C125,389 122,391 118,391 L110,389 C107,386 106,384 105.6,381.2 C104,365 101,348 99,333 Z" fill="#fff" stroke="#111" stroke-width="1.37" stroke-linejoin="round"/>
<path d="M106.5,337 C108,334 112,335 113,339 C114,343 112,346 109,345" fill="none" stroke="#111" stroke-width="1.17" stroke-linejoin="round"/>
<polyline points="96.0,348.0 109.5,341.0" fill="none" stroke="#111" stroke-width="1.04"/>
<ellipse cx="114.0" cy="374.7" rx="5.5" ry="7.0" transform="rotate(-15 114.0 374.7)" fill="#fff" stroke="#111" stroke-width="1.23"/>
<path d="M118,357 C121,354 124,356 124,360" fill="none" stroke="#111" stroke-width="1.04" stroke-linejoin="round"/>
<path d="M188.8,330 L188.8,359 L203,358 L203,330 C203,325 188.8,325 188.8,330 Z" fill="#fff" stroke="#111" stroke-width="1.30" stroke-linejoin="round"/>
<ellipse cx="196.0" cy="330.0" rx="7.0" ry="3.6" transform="rotate(0 196.0 330.0)" fill="#fff" stroke="#111" stroke-width="1.23"/>
<ellipse cx="196.0" cy="330.0" rx="3.8" ry="1.9" transform="rotate(0 196.0 330.0)" fill="#fff" stroke="#111" stroke-width="0.98"/>
<polygon points="148.5,352.0 188.8,335.0 188.8,361.0 150.0,380.0 147.5,379.0" fill="#fff" stroke="#111" stroke-width="1.37" stroke-linejoin="round"/>
<polyline points="151.5,354.0 151.5,378.5" fill="none" stroke="#111" stroke-width="0.91"/>
<ellipse cx="150.5" cy="350.5" rx="4.0" ry="2.2" transform="rotate(0 150.5 350.5)" fill="#fff" stroke="#111" stroke-width="1.04"/>
<ellipse cx="200.7" cy="349.6" rx="3.6" ry="4.5" transform="rotate(-10 200.7 349.6)" fill="#fff" stroke="#111" stroke-width="1.17"/>
<ellipse cx="200.7" cy="349.6" rx="1.6" ry="2.1" transform="rotate(0 200.7 349.6)" fill="#fff" stroke="#111" stroke-width="0.91"/>
<path d="M239.5,312 L239.5,325.5 C236,327 232,330 230.5,334 C229,338 229,342 231.8,343 L242.1,344.4 C244,341 246,339 247.3,339.2 C249,340 250,341 250,343 L250,350.8 L242.1,354.7 L224,365.1 L208.4,356" fill="#fff" stroke="#111" stroke-width="1.30" stroke-linejoin="round"/>
<polyline points="249.3,306.0 249.3,322.3 245.0,325.5 239.5,325.5" fill="none" stroke="#111" stroke-width="1.30"/>
<path d="M204.5,352.1 C212,350 220,349 224,349.5 C226,351 227,353 227.9,356" fill="none" stroke="#111" stroke-width="1.17" stroke-linejoin="round"/>
<polyline points="203.2,352.1 262.9,337.9 277.2,345.6" fill="none" stroke="#111" stroke-width="1.10"/>
<polyline points="239.5,312.0 239.5,324.0" fill="none" stroke="#111" stroke-width="0.91"/>
<polyline points="34.8,375.0 35.5,389.8" fill="none" stroke="#777" stroke-width="0.78"/>
<polyline points="47.3,363.6 53.0,387.5" fill="none" stroke="#777" stroke-width="0.78"/>
<polyline points="58.0,357.0 70.0,381.0" fill="none" stroke="#777" stroke-width="0.78"/>
<polyline points="76.0,348.0 87.0,375.0" fill="none" stroke="#777" stroke-width="0.78"/>
<polygon points="31.2,353.0 35.4,353.0 35.4,372.0 31.2,372.0" fill="#fff" stroke="#111" stroke-width="1.17" stroke-linejoin="round"/>
<ellipse cx="33.3" cy="353.0" rx="2.1" ry="1.1" transform="rotate(0 33.3 353.0)" fill="#fff" stroke="#111" stroke-width="1.04"/>
<ellipse cx="33.3" cy="372.0" rx="2.1" ry="1.1" transform="rotate(0 33.3 372.0)" fill="#fff" stroke="#111" stroke-width="1.04"/>
<ellipse cx="42.5" cy="360.0" rx="4.8" ry="6.8" transform="rotate(-15 42.5 360.0)" fill="#fff" stroke="#111" stroke-width="1.17"/>
<ellipse cx="41.5" cy="360.5" rx="4.8" ry="6.8" transform="rotate(-15 41.5 360.5)" fill="#fff" stroke="#111" stroke-width="1.17"/>
<ellipse cx="42.0" cy="360.5" rx="1.8" ry="2.6" transform="rotate(-15 42.0 360.5)" fill="#fff" stroke="#111" stroke-width="0.91"/>
<ellipse cx="50.0" cy="354.8" rx="3.0" ry="5.6" transform="rotate(-20 50.0 354.8)" fill="none" stroke="#111" stroke-width="1.10"/>
<ellipse cx="53.1" cy="353.2" rx="3.0" ry="5.6" transform="rotate(-20 53.1 353.2)" fill="none" stroke="#111" stroke-width="1.10"/>
<ellipse cx="56.2" cy="351.6" rx="3.0" ry="5.6" transform="rotate(-20 56.2 351.6)" fill="none" stroke="#111" stroke-width="1.10"/>
<ellipse cx="59.3" cy="350.0" rx="3.0" ry="5.6" transform="rotate(-20 59.3 350.0)" fill="none" stroke="#111" stroke-width="1.10"/>
<ellipse cx="62.4" cy="348.4" rx="3.0" ry="5.6" transform="rotate(-20 62.4 348.4)" fill="none" stroke="#111" stroke-width="1.10"/>
<ellipse cx="74.5" cy="342.0" rx="4.3" ry="5.5" transform="rotate(-15 74.5 342.0)" fill="#fff" stroke="#111" stroke-width="1.17"/>
<polygon points="72.5,349.8 77.5,346.3 71.5,337.7 66.5,341.2" fill="#fff" stroke="none" stroke-width="0.00" stroke-linejoin="round"/>
<polyline points="72.5,349.8 77.5,346.3" fill="none" stroke="#111" stroke-width="1.17"/>
<polyline points="66.5,341.2 71.5,337.7" fill="none" stroke="#111" stroke-width="1.17"/>
<ellipse cx="69.5" cy="345.5" rx="4.3" ry="5.5" transform="rotate(-15 69.5 345.5)" fill="#fff" stroke="#111" stroke-width="1.17"/>
<ellipse cx="69.5" cy="345.5" rx="1.9" ry="2.5" transform="rotate(-15 69.5 345.5)" fill="#fff" stroke="#111" stroke-width="0.94"/>
<polyline points="76.0,342.0 82.0,338.0" fill="none" stroke="#111" stroke-width="0.91"/>
<polyline points="135.0,392.0 131.0,396.0" fill="none" stroke="#777" stroke-width="0.78"/>
<polygon points="123.5,397.0 132.5,397.0 132.5,405.0 123.5,405.0" fill="#fff" stroke="#111" stroke-width="1.17" stroke-linejoin="round"/>
<ellipse cx="128.0" cy="397.0" rx="4.5" ry="2.0" transform="rotate(0 128.0 397.0)" fill="#fff" stroke="#111" stroke-width="1.04"/>
<ellipse cx="128.0" cy="405.0" rx="4.5" ry="2.0" transform="rotate(0 128.0 405.0)" fill="#fff" stroke="#111" stroke-width="1.04"/>
<polyline points="123.5,399.5 132.5,399.5" fill="none" stroke="#111" stroke-width="0.91"/>
<polyline points="123.5,401.5 132.5,401.5" fill="none" stroke="#111" stroke-width="0.91"/>
<polyline points="123.5,403.5 132.5,403.5" fill="none" stroke="#111" stroke-width="0.91"/>
<polyline points="42.0,432.0 54.0,428.0" fill="none" stroke="#777" stroke-width="0.78"/>
<polyline points="45.0,452.0 64.0,450.0" fill="none" stroke="#777" stroke-width="0.78"/>
<polyline points="84.5,412.0 94.3,406.1 96.7,426.8 146.0,402.0" fill="none" stroke="#111" stroke-width="1.04"/>
<polyline points="104.0,433.0 146.0,410.0" fill="none" stroke="#111" stroke-width="1.04"/>
<polyline points="109.0,384.0 109.2,435.7 141.6,419.2 141.6,431.0" fill="none" stroke="#111" stroke-width="1.04"/>
<polyline points="146.0,382.0 146.1,432.3 160.0,425.0" fill="none" stroke="#111" stroke-width="1.04"/>
<polygon points="64.4,425.5 85.9,415.2 83.1,409.2 61.6,419.5" fill="#fff" stroke="#111" stroke-width="1.17" stroke-linejoin="round"/>
<ellipse cx="84.5" cy="412.2" rx="1.8" ry="3.3" transform="rotate(-25.597672161781905 84.5 412.2)" fill="#fff" stroke="#111" stroke-width="0.94"/>
<polyline points="84.9,415.7 83.1,409.2" fill="none" stroke="#111" stroke-width="0.94"/>
<polyline points="82.7,416.7 80.9,410.3" fill="none" stroke="#111" stroke-width="0.94"/>
<polyline points="80.6,417.8 78.8,411.3" fill="none" stroke="#111" stroke-width="0.94"/>
<polyline points="78.4,418.8 76.6,412.3" fill="none" stroke="#111" stroke-width="0.94"/>
<polyline points="76.3,419.8 74.5,413.3" fill="none" stroke="#111" stroke-width="0.94"/>
<polyline points="74.1,420.8 72.3,414.4" fill="none" stroke="#111" stroke-width="0.94"/>
<polygon points="68.9,425.0 65.3,432.0 57.6,430.4 53.5,421.7 57.0,414.7 64.7,416.3" fill="#fff" stroke="#111" stroke-width="1.17" stroke-linejoin="round"/>
<ellipse cx="59.4" cy="424.2" rx="4.8" ry="7.7" transform="rotate(-25.597672161781905 59.4 424.2)" fill="#fff" stroke="#111" stroke-width="0.94"/>
<polygon points="74.4,452.5 105.6,435.9 102.4,429.9 71.2,446.5" fill="#fff" stroke="#111" stroke-width="1.17" stroke-linejoin="round"/>
<ellipse cx="104.0" cy="432.9" rx="1.9" ry="3.4" transform="rotate(-28.015267468011444 104.0 432.9)" fill="#fff" stroke="#111" stroke-width="0.94"/>
<polyline points="104.3,436.6 102.1,430.0" fill="none" stroke="#111" stroke-width="0.94"/>
<polyline points="101.6,438.0 99.5,431.5" fill="none" stroke="#111" stroke-width="0.94"/>
<polyline points="98.9,439.5 96.8,432.9" fill="none" stroke="#111" stroke-width="0.94"/>
<polyline points="96.2,440.9 94.1,434.3" fill="none" stroke="#111" stroke-width="0.94"/>
<polyline points="93.6,442.3 91.4,435.7" fill="none" stroke="#111" stroke-width="0.94"/>
<polyline points="90.9,443.7 88.8,437.2" fill="none" stroke="#111" stroke-width="0.94"/>
<polyline points="88.2,445.2 86.1,438.6" fill="none" stroke="#111" stroke-width="0.94"/>
<polygon points="79.0,451.8 75.6,459.1 67.7,457.8 63.1,449.1 66.4,441.8 74.4,443.1" fill="#fff" stroke="#111" stroke-width="1.17" stroke-linejoin="round"/>
<ellipse cx="69.3" cy="451.4" rx="4.9" ry="7.8" transform="rotate(-28.015267468011444 69.3 451.4)" fill="#fff" stroke="#111" stroke-width="0.94"/>
<ellipse cx="133.0" cy="442.5" rx="9.5" ry="11.5" transform="rotate(-15 133.0 442.5)" fill="#fff" stroke="#111" stroke-width="1.17"/>
<polygon points="135.0,454.6 139.0,452.1 127.0,432.9 123.0,435.4" fill="#fff" stroke="none" stroke-width="0.00" stroke-linejoin="round"/>
<polyline points="135.0,454.6 139.0,452.1" fill="none" stroke="#111" stroke-width="1.17"/>
<polyline points="123.0,435.4 127.0,432.9" fill="none" stroke="#111" stroke-width="1.17"/>
<ellipse cx="129.0" cy="445.0" rx="9.5" ry="11.5" transform="rotate(-15 129.0 445.0)" fill="#fff" stroke="#111" stroke-width="1.17"/>
<ellipse cx="129.0" cy="445.0" rx="5.2" ry="6.3" transform="rotate(-15 129.0 445.0)" fill="#fff" stroke="#111" stroke-width="0.94"/>
<polyline points="132.5,456.0 132.5,467.0" fill="none" stroke="#777" stroke-width="0.78"/>
<polyline points="80.0,481.0 94.0,488.0" fill="none" stroke="#777" stroke-width="0.78"/>
<polygon points="99.2,463.5 117.2,454.8 114.8,449.8 96.8,458.5" fill="#fff" stroke="#111" stroke-width="1.17" stroke-linejoin="round"/>
<ellipse cx="116.0" cy="452.3" rx="1.5" ry="2.8" transform="rotate(-25.796026494499923 116.0 452.3)" fill="#fff" stroke="#111" stroke-width="0.94"/>
<polyline points="115.6,455.6 114.2,450.0" fill="none" stroke="#111" stroke-width="0.94"/>
<polyline points="112.4,457.2 111.0,451.6" fill="none" stroke="#111" stroke-width="0.94"/>
<polyline points="109.1,458.7 107.8,453.2" fill="none" stroke="#111" stroke-width="0.94"/>
<polyline points="105.9,460.3 104.5,454.7" fill="none" stroke="#111" stroke-width="0.94"/>
<polyline points="102.6,461.9 101.3,456.3" fill="none" stroke="#111" stroke-width="0.94"/>
<ellipse cx="97.1" cy="461.4" rx="2.4" ry="4.0" transform="rotate(-25.796026494499923 97.1 461.4)" fill="#fff" stroke="#111" stroke-width="1.17"/>
<ellipse cx="98.0" cy="461.0" rx="4.5" ry="6.0" transform="rotate(-20 98.0 461.0)" fill="#fff" stroke="#111" stroke-width="1.17"/>
<polygon points="90.7,471.3 100.7,466.3 95.3,455.7 85.3,460.7" fill="#fff" stroke="none" stroke-width="0.00" stroke-linejoin="round"/>
<polyline points="90.7,471.3 100.7,466.3" fill="none" stroke="#111" stroke-width="1.17"/>
<polyline points="85.3,460.7 95.3,455.7" fill="none" stroke="#111" stroke-width="1.17"/>
<ellipse cx="88.0" cy="466.0" rx="4.5" ry="6.0" transform="rotate(-20 88.0 466.0)" fill="#fff" stroke="#111" stroke-width="1.17"/>
<ellipse cx="87.0" cy="467.0" rx="5.5" ry="7.0" transform="rotate(-20 87.0 467.0)" fill="#fff" stroke="#111" stroke-width="1.17"/>
<polygon points="75.3,481.1 90.3,473.1 83.7,460.9 68.7,468.9" fill="#fff" stroke="none" stroke-width="0.00" stroke-linejoin="round"/>
<polyline points="75.3,481.1 90.3,473.1" fill="none" stroke="#111" stroke-width="1.17"/>
<polyline points="68.7,468.9 83.7,460.9" fill="none" stroke="#111" stroke-width="1.17"/>
<ellipse cx="72.0" cy="475.0" rx="5.5" ry="7.0" transform="rotate(-20 72.0 475.0)" fill="#fff" stroke="#111" stroke-width="1.17"/>
<polyline points="74.0,470.0 76.0,481.0" fill="none" stroke="#111" stroke-width="0.78"/>
<polyline points="77.0,468.4 79.0,479.4" fill="none" stroke="#111" stroke-width="0.78"/>
<polyline points="80.0,466.8 82.0,477.8" fill="none" stroke="#111" stroke-width="0.78"/>
<polyline points="83.0,465.2 85.0,476.2" fill="none" stroke="#111" stroke-width="0.78"/>
<polyline points="86.0,463.6 88.0,474.6" fill="none" stroke="#111" stroke-width="0.78"/>
<ellipse cx="72.0" cy="475.0" rx="4.2" ry="6.0" transform="rotate(-20 72.0 475.0)" fill="#fff" stroke="#111" stroke-width="1.17"/>
<polygon points="57.8,489.3 74.8,480.3 69.2,469.7 52.2,478.7" fill="#fff" stroke="none" stroke-width="0.00" stroke-linejoin="round"/>
<polyline points="57.8,489.3 74.8,480.3" fill="none" stroke="#111" stroke-width="1.17"/>
<polyline points="52.2,478.7 69.2,469.7" fill="none" stroke="#111" stroke-width="1.17"/>
<ellipse cx="55.0" cy="484.0" rx="4.2" ry="6.0" transform="rotate(-20 55.0 484.0)" fill="#fff" stroke="#111" stroke-width="1.17"/>
<polygon points="55.2,485.9 58.1,486.7 58.5,488.3 56.1,489.7 56.2,491.0 58.9,493.1 58.8,494.7 55.9,494.6 55.6,495.7 57.6,498.9 56.9,500.1 54.1,498.5 53.5,499.2 54.4,502.9 53.4,503.5 51.1,500.7 50.2,501.0 49.9,504.5 48.7,504.5 47.3,501.0 46.3,500.7 44.9,503.5 43.6,502.8 43.4,499.1 42.5,498.4 40.2,499.9 39.2,498.7 40.1,495.5 39.4,494.4 36.6,494.5 36.0,492.9 38.0,490.8 37.7,489.6 34.8,488.1 34.7,486.5 37.4,485.8 37.5,484.6 35.1,481.9 35.5,480.5 38.4,481.3 38.9,480.4 37.4,476.9 38.3,475.9 40.9,478.2 41.7,477.7 41.3,474.0 42.5,473.6 44.4,476.9 45.3,476.9 46.2,473.7 47.5,474.0 48.3,477.7 49.3,478.2 51.2,476.0 52.3,477.0 52.0,480.5 52.8,481.4 55.4,480.6 56.2,482.0 54.7,484.7 55.2,485.9" fill="#fff" stroke="#111" stroke-width="1.56" stroke-linejoin="round"/>
<ellipse cx="49.0" cy="487.0" rx="5.0" ry="7.5" transform="rotate(-20 49.0 487.0)" fill="#fff" stroke="#111" stroke-width="1.04"/>
<polyline points="117.4,385.0 117.4,519.0" fill="none" stroke="#333" stroke-width="0.85"/>
<polyline points="153.6,378.0 153.6,520.0" fill="none" stroke="#333" stroke-width="0.85"/>
<polyline points="193.4,361.0 193.4,520.0" fill="none" stroke="#333" stroke-width="0.85"/>
<polyline points="244.3,323.0 244.5,523.0" fill="none" stroke="#333" stroke-width="0.85"/>
<path d="M205.6,421 C210,430 218,436 227.5,437 L261,418" fill="none" stroke="#111" stroke-width="1.17" stroke-linejoin="round"/>
<polyline points="208.0,418.0 226.0,410.0" fill="none" stroke="#111" stroke-width="0.91"/>
<path d="M155.8,401.1 C160,396 165,392 168.5,391.6 L176.9,391.6 C181,393 183,396 185.4,398 L191.7,399 L192.7,401.1 L193.8,430.6 C190,436 185,440 180,441.2 L174.8,437 L160,436 C154,430 152,410 155.8,401.1 Z" fill="#fff" stroke="#111" stroke-width="1.37" stroke-linejoin="round"/>
<path d="M170.5,408 L191,400 L193,430 L175,438" fill="none" stroke="#111" stroke-width="1.30" stroke-linejoin="round"/>
<polyline points="174.0,407.0 176.0,436.0" fill="none" stroke="#111" stroke-width="0.98"/>
<polyline points="178.2,405.4 180.2,434.2" fill="none" stroke="#111" stroke-width="0.98"/>
<polyline points="182.4,403.8 184.4,432.4" fill="none" stroke="#111" stroke-width="0.98"/>
<polyline points="186.6,402.2 188.6,430.6" fill="none" stroke="#111" stroke-width="0.98"/>
<ellipse cx="163.0" cy="431.5" rx="3.0" ry="3.5" transform="rotate(-15 163.0 431.5)" fill="#fff" stroke="#111" stroke-width="1.17"/>
<polygon points="159.6,437.1 164.6,434.6 161.4,428.4 156.4,430.9" fill="#fff" stroke="none" stroke-width="0.00" stroke-linejoin="round"/>
<polyline points="159.6,437.1 164.6,434.6" fill="none" stroke="#111" stroke-width="1.17"/>
<polyline points="156.4,430.9 161.4,428.4" fill="none" stroke="#111" stroke-width="1.17"/>
<ellipse cx="158.0" cy="434.0" rx="3.0" ry="3.5" transform="rotate(-15 158.0 434.0)" fill="#fff" stroke="#111" stroke-width="1.17"/>
<ellipse cx="201.0" cy="417.0" rx="3.5" ry="4.5" transform="rotate(-15 201.0 417.0)" fill="#fff" stroke="#111" stroke-width="1.17"/>
<polygon points="198.3,423.8 203.3,420.8 198.7,413.2 193.7,416.2" fill="#fff" stroke="none" stroke-width="0.00" stroke-linejoin="round"/>
<polyline points="198.3,423.8 203.3,420.8" fill="none" stroke="#111" stroke-width="1.17"/>
<polyline points="193.7,416.2 198.7,413.2" fill="none" stroke="#111" stroke-width="1.17"/>
<ellipse cx="196.0" cy="420.0" rx="3.5" ry="4.5" transform="rotate(-15 196.0 420.0)" fill="#fff" stroke="#111" stroke-width="1.17"/>
<ellipse cx="166.4" cy="423.2" rx="9.5" ry="11.7" transform="rotate(-10 166.4 423.2)" fill="#fff" stroke="#111" stroke-width="1.43"/>
<ellipse cx="166.3" cy="422.8" rx="5.3" ry="6.9" transform="rotate(-10 166.3 422.8)" fill="#fff" stroke="#111" stroke-width="1.30"/>
<polyline points="150.0,429.0 165.0,422.5" fill="none" stroke="#111" stroke-width="1.04"/>
<polyline points="155.0,400.0 170.0,394.0 178.0,393.0" fill="none" stroke="#111" stroke-width="1.04"/>
<polyline points="199.5,424.8 208.0,451.6" fill="none" stroke="#777" stroke-width="0.78"/>
<polyline points="204.0,383.0 204.0,395.0" fill="none" stroke="#777" stroke-width="0.78"/>
<polyline points="191.8,383.6 209.6,389.0" fill="none" stroke="#555" stroke-width="0.78"/>
<ellipse cx="208.5" cy="397.0" rx="6.3" ry="8.2" transform="rotate(-15 208.5 397.0)" fill="#fff" stroke="#111" stroke-width="1.17"/>
<polygon points="208.0,407.0 213.0,403.5 204.0,390.5 199.0,394.0" fill="#fff" stroke="none" stroke-width="0.00" stroke-linejoin="round"/>
<polyline points="208.0,407.0 213.0,403.5" fill="none" stroke="#111" stroke-width="1.17"/>
<polyline points="199.0,394.0 204.0,390.5" fill="none" stroke="#111" stroke-width="1.17"/>
<ellipse cx="203.5" cy="400.5" rx="6.3" ry="8.2" transform="rotate(-15 203.5 400.5)" fill="#fff" stroke="#111" stroke-width="1.17"/>
<ellipse cx="203.5" cy="400.5" rx="4.1" ry="5.3" transform="rotate(-15 203.5 400.5)" fill="#fff" stroke="#111" stroke-width="0.94"/>
<polyline points="207.0,369.0 217.0,378.0" fill="none" stroke="#777" stroke-width="0.78"/>
<polygon points="230.2,386.3 233.1,387.0 233.2,388.4 230.6,389.5 230.5,390.5 233.0,392.7 232.6,394.0 229.8,393.5 229.3,394.4 230.8,397.5 230.0,398.4 227.5,396.5 226.8,397.0 227.1,400.5 226.0,400.9 224.3,397.9 223.4,397.9 222.4,401.0 221.2,400.8 220.7,397.4 219.8,396.9 217.8,399.1 216.8,398.3 217.5,395.0 216.8,394.2 214.1,395.0 213.5,393.7 215.3,391.4 215.0,390.3 212.1,389.6 212.0,388.2 214.6,387.1 214.7,386.1 212.2,383.9 212.6,382.6 215.4,383.1 215.9,382.2 214.4,379.1 215.2,378.2 217.7,380.1 218.4,379.6 218.1,376.1 219.2,375.7 220.9,378.7 221.8,378.7 222.8,375.6 224.0,375.8 224.5,379.2 225.4,379.7 227.4,377.5 228.4,378.3 227.7,381.6 228.4,382.4 231.1,381.6 231.7,382.9 229.9,385.2 230.2,386.3" fill="#fff" stroke="#111" stroke-width="1.95" stroke-linejoin="round"/>
<ellipse cx="221.0" cy="389.5" rx="5.5" ry="7.0" transform="rotate(-15 221.0 389.5)" fill="#fff" stroke="#111" stroke-width="1.04"/>
<ellipse cx="221.0" cy="389.5" rx="2.8" ry="3.6" transform="rotate(-15 221.0 389.5)" fill="#fff" stroke="#111" stroke-width="0.91"/>
<polyline points="260.0,375.0 251.0,376.5" fill="none" stroke="#777" stroke-width="0.78"/>
<ellipse cx="244.6" cy="376.8" rx="6.5" ry="8.3" transform="rotate(-15 244.6 376.8)" fill="#fff" stroke="#111" stroke-width="1.17"/>
<ellipse cx="244.6" cy="376.8" rx="3.5" ry="4.8" transform="rotate(-15 244.6 376.8)" fill="#fff" stroke="#111" stroke-width="1.04"/>
<polyline points="282.3,390.7 262.8,399.2" fill="none" stroke="#777" stroke-width="0.78"/>
<polygon points="227.5,409.0 259.2,390.7 261.6,415.0 228.7,434.6" fill="#fff" stroke="#111" stroke-width="1.30" stroke-linejoin="round"/>
<polyline points="230.0,411.5 259.0,394.0" fill="none" stroke="#111" stroke-width="0.91"/>
<polygon points="225.5,410.5 227.5,409.0 228.7,434.6 226.7,436.0" fill="#fff" stroke="#111" stroke-width="1.17" stroke-linejoin="round"/>
<polyline points="249.4,426.0 250.6,431.0 280.0,414.6 280.0,412.0" fill="none" stroke="#111" stroke-width="1.04"/>
<polyline points="300.6,409.0 287.2,422.4" fill="none" stroke="#777" stroke-width="0.78"/>
<polygon points="277.5,419.0 284.5,419.0 284.5,431.0 277.5,431.0" fill="#fff" stroke="#111" stroke-width="1.17" stroke-linejoin="round"/>
<ellipse cx="281.0" cy="419.0" rx="3.5" ry="1.6" transform="rotate(0 281.0 419.0)" fill="#fff" stroke="#111" stroke-width="1.04"/>
<polyline points="277.5,421.5 284.5,421.5" fill="none" stroke="#111" stroke-width="0.91"/>
<polyline points="277.5,424.0 284.5,424.0" fill="none" stroke="#111" stroke-width="0.91"/>
<polyline points="277.5,426.5 284.5,426.5" fill="none" stroke="#111" stroke-width="0.91"/>
<polygon points="273.0,432.0 276.0,429.0 286.0,429.0 289.0,432.0 289.0,437.0 286.0,440.0 276.0,440.0 273.0,437.0" fill="#fff" stroke="#111" stroke-width="1.23" stroke-linejoin="round"/>
<polyline points="276.0,429.0 277.0,435.5 285.0,435.5 286.0,429.0" fill="none" stroke="#111" stroke-width="0.91"/>
<polyline points="284.7,443.0 317.6,474.7" fill="none" stroke="#777" stroke-width="0.78"/>
<polyline points="117.0,519.0 117.0,518.0" fill="none" stroke="#111" stroke-width="1.04"/>
<ellipse cx="117.5" cy="566.0" rx="8.5" ry="4.8" transform="rotate(0 117.5 566.0)" fill="#fff" stroke="#111" stroke-width="1.30"/>
<ellipse cx="117.5" cy="562.5" rx="8.5" ry="4.8" transform="rotate(0 117.5 562.5)" fill="#fff" stroke="#111" stroke-width="1.30"/>
<polygon points="113.0,520.5 121.0,520.5 121.0,561.0 113.0,561.0" fill="#fff" stroke="#111" stroke-width="1.30" stroke-linejoin="round"/>
<ellipse cx="117.0" cy="520.5" rx="4.0" ry="1.8" transform="rotate(0 117.0 520.5)" fill="#fff" stroke="#111" stroke-width="1.17"/>
<polyline points="113.0,523.5 121.0,523.5" fill="none" stroke="#111" stroke-width="1.04"/>
<polyline points="113.0,526.7 121.0,526.7" fill="none" stroke="#111" stroke-width="1.04"/>
<polyline points="113.0,529.9 121.0,529.9" fill="none" stroke="#111" stroke-width="1.04"/>
<polyline points="113.0,533.1 121.0,533.1" fill="none" stroke="#111" stroke-width="1.04"/>
<polyline points="113.0,536.0 121.0,536.0" fill="none" stroke="#111" stroke-width="1.04"/>
<ellipse cx="117.5" cy="561.0" rx="4.2" ry="1.5" transform="rotate(0 117.5 561.0)" fill="none" stroke="#111" stroke-width="1.04"/>
<polyline points="154.4,520.0 154.4,519.0" fill="none" stroke="#111" stroke-width="1.04"/>
<ellipse cx="154.9" cy="567.0" rx="8.5" ry="4.8" transform="rotate(0 154.9 567.0)" fill="#fff" stroke="#111" stroke-width="1.30"/>
<ellipse cx="154.9" cy="563.5" rx="8.5" ry="4.8" transform="rotate(0 154.9 563.5)" fill="#fff" stroke="#111" stroke-width="1.30"/>
<polygon points="150.4,521.5 158.4,521.5 158.4,562.0 150.4,562.0" fill="#fff" stroke="#111" stroke-width="1.30" stroke-linejoin="round"/>
<ellipse cx="154.4" cy="521.5" rx="4.0" ry="1.8" transform="rotate(0 154.4 521.5)" fill="#fff" stroke="#111" stroke-width="1.17"/>
<polyline points="150.4,524.5 158.4,524.5" fill="none" stroke="#111" stroke-width="1.04"/>
<polyline points="150.4,527.7 158.4,527.7" fill="none" stroke="#111" stroke-width="1.04"/>
<polyline points="150.4,530.9 158.4,530.9" fill="none" stroke="#111" stroke-width="1.04"/>
<polyline points="150.4,534.1 158.4,534.1" fill="none" stroke="#111" stroke-width="1.04"/>
<polyline points="150.4,537.0 158.4,537.0" fill="none" stroke="#111" stroke-width="1.04"/>
<ellipse cx="154.9" cy="562.0" rx="4.2" ry="1.5" transform="rotate(0 154.9 562.0)" fill="none" stroke="#111" stroke-width="1.04"/>
<polyline points="194.9,520.0 194.9,519.0" fill="none" stroke="#111" stroke-width="1.04"/>
<ellipse cx="195.4" cy="567.0" rx="8.5" ry="4.8" transform="rotate(0 195.4 567.0)" fill="#fff" stroke="#111" stroke-width="1.30"/>
<ellipse cx="195.4" cy="563.5" rx="8.5" ry="4.8" transform="rotate(0 195.4 563.5)" fill="#fff" stroke="#111" stroke-width="1.30"/>
<polygon points="190.9,521.5 198.9,521.5 198.9,562.0 190.9,562.0" fill="#fff" stroke="#111" stroke-width="1.30" stroke-linejoin="round"/>
<ellipse cx="194.9" cy="521.5" rx="4.0" ry="1.8" transform="rotate(0 194.9 521.5)" fill="#fff" stroke="#111" stroke-width="1.17"/>
<polyline points="190.9,524.5 198.9,524.5" fill="none" stroke="#111" stroke-width="1.04"/>
<polyline points="190.9,527.7 198.9,527.7" fill="none" stroke="#111" stroke-width="1.04"/>
<polyline points="190.9,530.9 198.9,530.9" fill="none" stroke="#111" stroke-width="1.04"/>
<polyline points="190.9,534.1 198.9,534.1" fill="none" stroke="#111" stroke-width="1.04"/>
<polyline points="190.9,537.0 198.9,537.0" fill="none" stroke="#111" stroke-width="1.04"/>
<ellipse cx="195.4" cy="562.0" rx="4.2" ry="1.5" transform="rotate(0 195.4 562.0)" fill="none" stroke="#111" stroke-width="1.04"/>
<polyline points="245.7,523.0 245.7,522.0" fill="none" stroke="#111" stroke-width="1.04"/>
<ellipse cx="246.2" cy="570.0" rx="8.5" ry="4.8" transform="rotate(0 246.2 570.0)" fill="#fff" stroke="#111" stroke-width="1.30"/>
<ellipse cx="246.2" cy="566.5" rx="8.5" ry="4.8" transform="rotate(0 246.2 566.5)" fill="#fff" stroke="#111" stroke-width="1.30"/>
<polygon points="241.7,524.5 249.7,524.5 249.7,565.0 241.7,565.0" fill="#fff" stroke="#111" stroke-width="1.30" stroke-linejoin="round"/>
<ellipse cx="245.7" cy="524.5" rx="4.0" ry="1.8" transform="rotate(0 245.7 524.5)" fill="#fff" stroke="#111" stroke-width="1.17"/>
<polyline points="241.7,527.5 249.7,527.5" fill="none" stroke="#111" stroke-width="1.04"/>
<polyline points="241.7,530.7 249.7,530.7" fill="none" stroke="#111" stroke-width="1.04"/>
<polyline points="241.7,533.9 249.7,533.9" fill="none" stroke="#111" stroke-width="1.04"/>
<polyline points="241.7,537.1 249.7,537.1" fill="none" stroke="#111" stroke-width="1.04"/>
<polyline points="241.7,540.0 249.7,540.0" fill="none" stroke="#111" stroke-width="1.04"/>
<ellipse cx="246.2" cy="565.0" rx="4.2" ry="1.5" transform="rotate(0 246.2 565.0)" fill="none" stroke="#111" stroke-width="1.04"/>
<polyline points="122.0,528.0 131.0,536.0" fill="none" stroke="#777" stroke-width="0.78"/>
<polyline points="159.0,538.0 166.0,529.0" fill="none" stroke="#777" stroke-width="0.78"/>
<polyline points="200.0,534.0 210.0,541.0" fill="none" stroke="#777" stroke-width="0.78"/>
<polyline points="250.0,535.0 262.0,526.0" fill="none" stroke="#777" stroke-width="0.78"/>
<rect x="143.9" y="254" width="12.699999999999989" height="11" fill="#ffff00"/>
<text x="150.2" y="262.8" text-anchor="middle" font-family="Liberation Sans" font-size="10" fill="#000">33</text>
<rect x="125.4" y="537.7" width="14.599999999999994" height="12.5" fill="#ffff00"/>
<text x="132.7" y="548.0" text-anchor="middle" font-family="Liberation Sans" font-size="10" fill="#000">37</text>
<rect x="163" y="517" width="14.199999999999989" height="11.799999999999955" fill="#ffff00"/>
<text x="170.1" y="526.6" text-anchor="middle" font-family="Liberation Sans" font-size="10" fill="#000">34</text>
<rect x="207.3" y="540.8" width="14.5" height="11.900000000000091" fill="#ffff00"/>
<text x="214.6" y="550.5" text-anchor="middle" font-family="Liberation Sans" font-size="10" fill="#000">35</text>
<rect x="260.8" y="513.9" width="15.0" height="12.100000000000023" fill="#ffff00"/>
<text x="268.3" y="523.8" text-anchor="middle" font-family="Liberation Sans" font-size="10" fill="#000">36</text>
<rect x="318.1" y="474.3" width="8.099999999999966" height="11.399999999999977" fill="#f08080"/>
<text x="322.1" y="483.5" text-anchor="middle" font-family="Liberation Sans" font-size="10" fill="#a00000">1</text></g></svg>
<div id="tb"><div id="tbi"></div></div>
<svg style="position:absolute;left:0;top:0" width="60" height="200">
<defs>
<linearGradient id="bg1" x1="0" y1="0" x2="0" y2="1"><stop offset="0" stop-color="#f2f2f2"/><stop offset="1" stop-color="#cfcfcf"/></linearGradient>
</defs>
<!-- plus -->
<path d="M20.8 33.9 H35.2 V39.6 L37 41.1 L35.2 42.6 V48 H20.8 Z" fill="url(#bg1)" stroke="#9a9a9a" stroke-width="0.8"/>
<path d="M23.2 41 H33 M28.1 36.2 V46" stroke="#5e5e5e" stroke-width="1.9"/>
<!-- minus -->
<path d="M35.4 56.7 H21 V62.3 L19.2 63.8 L21 65.3 V71 H35.4 Z" fill="url(#bg1)" stroke="#9a9a9a" stroke-width="0.8"/>
<path d="M23.2 63.8 H33" stroke="#5e5e5e" stroke-width="1.9"/>
<!-- grid -->
<rect x="20.8" y="85.8" width="14.5" height="14.2" fill="url(#bg1)" stroke="#9a9a9a" stroke-width="0.8"/>
<rect x="23.2" y="87.4" width="3.6" height="3.6" fill="#7a7a7a"/><rect x="29.3" y="87.4" width="3.6" height="3.6" fill="#7a7a7a"/>
<rect x="23.2" y="93.5" width="3.6" height="3.6" fill="#7a7a7a"/><rect x="29.3" y="93.5" width="3.6" height="3.6" fill="#7a7a7a"/>
<!-- square -->
<rect x="20.8" y="108.3" width="14.5" height="14.5" fill="url(#bg1)" stroke="#9a9a9a" stroke-width="0.8"/>
<rect x="24.3" y="111.8" width="7.5" height="7.5" fill="none" stroke="#6e6e6e" stroke-width="1.2"/>
<!-- exit -->
<defs><linearGradient id="bg2" x1="0" y1="0" x2="1" y2="0"><stop offset="0" stop-color="#ffffff"/><stop offset="0.6" stop-color="#d8d8d8"/><stop offset="1" stop-color="#a9a9a9"/></linearGradient></defs>
<rect x="20" y="162" width="4.2" height="4.2" fill="#e2e2e2" stroke="#999" stroke-width="0.6"/>
<rect x="20" y="167" width="4.2" height="4.2" fill="#e2e2e2" stroke="#999" stroke-width="0.6"/>
<rect x="20" y="172" width="4.2" height="4.2" fill="#e2e2e2" stroke="#999" stroke-width="0.6"/>
<rect x="25" y="161.5" width="11.6" height="14.6" fill="url(#bg2)"/>
<rect x="25" y="161.5" width="1.2" height="14.6" fill="#f8f8f8"/>
<path d="M27 168.8 H33" stroke="#555" stroke-width="2"/>
<path d="M32.2 165.6 L36.2 168.8 L32.2 172 Z" fill="#555"/>
</svg>

<div class="hdr"></div>
<div class="sel"></div>
<div style="position:absolute;left:404px;top:20px;width:753px;height:1px;background:#fff"></div>
<div class="vh" style="left:484px"></div>
<div class="vh" style="left:568px"></div>
<div class="vh" style="left:603px"></div>
<div class="vh" style="left:687px"></div>
<div class="vh" style="left:722px"></div>
<div class="vh" style="left:806px"></div>
<div class="vh" style="left:942px"></div>
<div class="vh" style="left:1012px"></div>
<div class="vh" style="left:1082px"></div>
<div class="th" style="left:490px;top:24px">Symbol(s)</div>
<div class="th" style="left:573px;top:24px">Item</div>
<div class="th" style="left:608px;top:24px">Parts No.</div>
<div class="th" style="left:693px;top:24px">Qty.</div>
<div class="th" style="left:728px;top:24px">Latest Part No.</div>
<div class="th" style="left:812px;top:24px">Description</div>
<div class="th" style="left:949px;top:24px">Cut Out</div>
<div class="th" style="left:1019px;top:24px">Cut In</div>
<div class="th" style="left:1089px;top:24px">Comment</div>
<div class="hl" style="top:60px"></div>
<div class="hl" style="top:80px"></div>
<div class="hl" style="top:100px"></div>
<div class="hl" style="top:120px"></div>
<div class="hl" style="top:140px"></div>
<div class="hl" style="top:160px"></div>
<div class="hl" style="top:180px"></div>
<div class="hl" style="top:200px"></div>
<div class="vl" style="left:484px;top:41px;height:160px"></div>
<div class="vl" style="left:568px;top:41px;height:160px"></div>
<div class="vl" style="left:603px;top:41px;height:160px"></div>
<div class="vl" style="left:687px;top:41px;height:160px"></div>
<div class="vl" style="left:722px;top:41px;height:160px"></div>
<div class="vl" style="left:806px;top:41px;height:160px"></div>
<div class="vl" style="left:942px;top:41px;height:160px"></div>
<div class="vl" style="left:1012px;top:41px;height:160px"></div>
<div class="vl" style="left:1082px;top:41px;height:160px"></div>
<div style="position:absolute;left:484px;top:41px;width:1px;height:19px;background:#dfe9f4"></div>
<div style="position:absolute;left:568px;top:41px;width:1px;height:19px;background:#dfe9f4"></div>
<div style="position:absolute;left:603px;top:41px;width:1px;height:19px;background:#dfe9f4"></div>
<div style="position:absolute;left:687px;top:41px;width:1px;height:19px;background:#dfe9f4"></div>
<div style="position:absolute;left:722px;top:41px;width:1px;height:19px;background:#dfe9f4"></div>
<div style="position:absolute;left:806px;top:41px;width:1px;height:19px;background:#dfe9f4"></div>
<div style="position:absolute;left:942px;top:41px;width:1px;height:19px;background:#dfe9f4"></div>
<div style="position:absolute;left:1012px;top:41px;width:1px;height:19px;background:#dfe9f4"></div>
<div style="position:absolute;left:1082px;top:41px;width:1px;height:19px;background:#dfe9f4"></div>
<div class="t" style="left:572px;top:43px;color:#fff">1</div>
<div class="t" style="left:607px;top:43px;color:#fff">4111K091</div>
<div class="t" style="left:691px;top:43px;color:#fff">1</div>
<div class="t" style="left:726px;top:43px;color:#fff">4111K091</div>
<div class="t" style="left:810px;top:43px;color:#fff;transform:scaleX(0.885);transform-origin:0 0">BALANCER</div>
<div class="t" style="left:572px;top:63px;color:#000">1</div>
<div class="t" style="left:607px;top:63px;color:#000">4111K055</div>
<div class="t" style="left:691px;top:63px;color:#000">1</div>
<div class="t" style="left:726px;top:63px;color:#000">4111K091</div>
<div class="t" style="left:810px;top:63px;color:#000;transform:scaleX(0.885);transform-origin:0 0">BALANCER</div>
<div class="t" style="left:572px;top:83px;color:#000">1</div>
<div class="t" style="left:607px;top:83px;color:#000">4111K059</div>
<div class="t" style="left:691px;top:83px;color:#000">1</div>
<div class="t" style="left:726px;top:83px;color:#000">4111K091</div>
<div class="t" style="left:810px;top:83px;color:#000;transform:scaleX(0.885);transform-origin:0 0">BALANCER</div>
<div class="t" style="left:572px;top:103px;color:#000">33</div>
<div class="t" style="left:607px;top:103px;color:#000">33137409</div>
<div class="t" style="left:691px;top:103px;color:#000">2</div>
<div class="t" style="left:726px;top:103px;color:#000">33137409</div>
<div class="t" style="left:810px;top:103px;color:#000;transform:scaleX(0.885);transform-origin:0 0">THIMBLE</div>
<div class="t" style="left:572px;top:123px;color:#000">34</div>
<div class="t" style="left:607px;top:123px;color:#000">2314J013</div>
<div class="t" style="left:691px;top:123px;color:#000">2</div>
<div class="t" style="left:726px;top:123px;color:#000">2314J013</div>
<div class="t" style="left:810px;top:123px;color:#000;transform:scaleX(0.885);transform-origin:0 0">SCREW</div>
<div class="t" style="left:572px;top:143px;color:#000">35</div>
<div class="t" style="left:607px;top:143px;color:#000">2314J013</div>
<div class="t" style="left:691px;top:143px;color:#000">1</div>
<div class="t" style="left:726px;top:143px;color:#000">2314J013</div>
<div class="t" style="left:810px;top:143px;color:#000;transform:scaleX(0.885);transform-origin:0 0">SCREW</div>
<div class="t" style="left:572px;top:163px;color:#000">36</div>
<div class="t" style="left:607px;top:163px;color:#000">2314J011</div>
<div class="t" style="left:691px;top:163px;color:#000">2</div>
<div class="t" style="left:726px;top:163px;color:#000">2314J011</div>
<div class="t" style="left:810px;top:163px;color:#000;transform:scaleX(0.885);transform-origin:0 0">SCREW</div>
<div class="t" style="left:572px;top:183px;color:#000">37</div>
<div class="t" style="left:607px;top:183px;color:#000">2314J015</div>
<div class="t" style="left:691px;top:183px;color:#000">1</div>
<div class="t" style="left:726px;top:183px;color:#000">2314J015</div>
<div class="t" style="left:810px;top:183px;color:#000;transform:scaleX(0.885);transform-origin:0 0">SCREW</div>
<svg style="position:absolute;left:0;top:0;will-change:transform" width="1157" height="220">
<defs>
<radialGradient id="ig" cx="0.4" cy="0.35" r="0.7"><stop offset="0" stop-color="#ffffff"/><stop offset="0.6" stop-color="#e3eef7"/><stop offset="1" stop-color="#a9c6de"/></radialGradient>
<g id="gearB" transform="scale(0.88)"><circle r="3.2" fill="none" stroke="#4b70e0" stroke-width="2.2"/><circle r="4.4" fill="none" stroke="#4b70e0" stroke-width="1.6" stroke-dasharray="1.8 1.65"/></g>
<g id="gearG" transform="scale(0.82)"><circle r="3.1" fill="none" stroke="#5fae1e" stroke-width="2.4"/><circle r="4.4" fill="none" stroke="#5fae1e" stroke-width="1.7" stroke-dasharray="1.8 1.65"/></g>
<g id="gearG2" transform="scale(0.95)"><circle r="3.3" fill="none" stroke="#5fae1e" stroke-width="2.6"/><circle r="4.8" fill="none" stroke="#5fae1e" stroke-width="1.8" stroke-dasharray="2 1.75"/></g>
<g id="cart" fill="none" stroke="#49709e" stroke-width="1.2">
<path d="M0.5 0.8 L3 2.2 L5 10.5 L14 10.5"/>
<path d="M3.3 3 L15.5 3 L14.2 8.4 L4.5 8.4 Z" fill="#fff"/>
<path d="M6 3.2 V8.2 M8.2 3.2 V8.2 M10.4 3.2 V8.2 M12.6 3.2 V8.2 M3.8 5.6 H15" stroke-width="0.9"/>
<circle cx="5.5" cy="12" r="0.9" fill="#49709e" stroke="none"/><circle cx="13.5" cy="12" r="0.9" fill="#49709e" stroke="none"/>
</g>
<g id="info"><circle r="6.6" fill="url(#ig)" stroke="#9dbcd8" stroke-width="0.8"/><rect x="-0.9" y="-1.6" width="1.9" height="5.4" fill="#3d5f8f"/><rect x="-0.9" y="-4.4" width="1.9" height="1.8" fill="#3d5f8f"/></g>
<g id="scirc"><circle r="6.6" fill="url(#ig)" stroke="#9dbcd8" stroke-width="0.8"/><text x="0" y="3.8" text-anchor="middle" font-family="Liberation Sans" font-weight="bold" font-size="11" fill="#105c8e">S</text></g>
<g id="book"><path d="M0.5 1.5 L0.5 12.5 L7.5 13 L15 12.5 L15 1.5 L9 0.5 L7.5 1.5 L6 0.5 Z" fill="#f4f4f4" stroke="#808060" stroke-width="0.8"/><path d="M1.5 12 L7.5 12.6 L14 12" fill="none" stroke="#333" stroke-width="0.8"/><ellipse cx="8" cy="6.2" rx="3.6" ry="4.6" fill="none" stroke="#333" stroke-width="1.1"/><path d="M10.5 10 L13.8 13.8" stroke="#111" stroke-width="1.6"/></g>
</defs>
<use href="#gearB" x="413.7" y="47.3"/>
<use href="#gearG" x="419.3" y="53.1"/>
<use href="#cart" x="426" y="42.6"/>
<use href="#info" x="451.8" y="49.7"/>
<use href="#gearB" x="413.7" y="67.3"/>
<use href="#gearG" x="419.3" y="73.1"/>
<use href="#cart" x="426" y="62.6"/>
<use href="#scirc" x="451.8" y="69.7"/>
<use href="#info" x="470.1" y="69.7"/>
<path d="M491 64.8 L501 74.7 M501 64.8 L491 74.7" stroke="#ff5a1f" stroke-width="1.6"/>
<use href="#book" x="505" y="63"/>
<use href="#gearB" x="413.7" y="87.3"/>
<use href="#gearG" x="419.3" y="93.1"/>
<use href="#cart" x="426" y="82.6"/>
<use href="#scirc" x="451.8" y="89.7"/>
<use href="#info" x="470.1" y="89.7"/>
<use href="#book" x="488" y="83"/>
<use href="#gearG2" x="415.8" y="109.8"/>
<use href="#cart" x="426" y="102.6"/>
<use href="#info" x="451.8" y="109.7"/>
<use href="#gearG2" x="415.8" y="129.8"/>
<use href="#cart" x="426" y="122.6"/>
<use href="#info" x="451.8" y="129.7"/>
<use href="#gearG2" x="415.8" y="149.8"/>
<use href="#cart" x="426" y="142.6"/>
<use href="#info" x="451.8" y="149.7"/>
<use href="#gearG2" x="415.8" y="169.8"/>
<use href="#cart" x="426" y="162.6"/>
<use href="#info" x="451.8" y="169.7"/>
<use href="#gearG2" x="415.8" y="189.8"/>
<use href="#cart" x="426" y="182.6"/>
<use href="#info" x="451.8" y="189.7"/>
<rect x="432.5" y="23.5" width="12.5" height="12.5" fill="#1c6fbf" stroke="#3f8ad4" stroke-width="1"/>
<rect x="433.3" y="24.2" width="11" height="1.6" fill="#e8f0f8"/>
<rect x="433.3" y="27.3" width="3" height="8.3" fill="#f4f4f4"/>
<circle cx="440.3" cy="31.3" r="4.4" fill="#d8d8d8" stroke="#2066b0" stroke-width="1"/>
<path d="M443.5 34.5 L447.5 38.5" stroke="#3a7fc8" stroke-width="2"/>
</svg>
<svg style="position:absolute;left:1110px;top:560px;will-change:transform" width="47" height="56">
<g fill="none" stroke="#0a539e" stroke-width="2.8">
<circle cx="16" cy="16.2" r="7"/><circle cx="32.2" cy="16.2" r="7"/>
<circle cx="16" cy="33" r="7"/><circle cx="32.2" cy="33" r="7"/>
<path d="M12 20.5 L20 12 M28.2 12 L36.2 20.5 M12 28.7 L20 37.2 M28.2 37.2 L36.2 28.7" stroke-width="2.4"/>
</g>
<path d="M24.1 6.5 L26 9.5 L24.1 12 L22.2 9.5 Z M24.1 37.2 L26 40 L24.1 42.5 L22.2 40 Z M7.5 24.6 L10 22.8 L12 24.6 L10 26.4 Z M36.2 24.6 L38.4 22.8 L40.8 24.6 L38.4 26.4 Z" fill="#0a539e"/>
<text x="6.3" y="53.6" font-family="Liberation Sans" font-weight="bold" font-size="10.4" fill="#0a539e" letter-spacing="-0.35">Perkins</text>
<circle cx="43.8" cy="48.6" r="0.7" fill="#0a539e"/>
</svg>

</body></html>
